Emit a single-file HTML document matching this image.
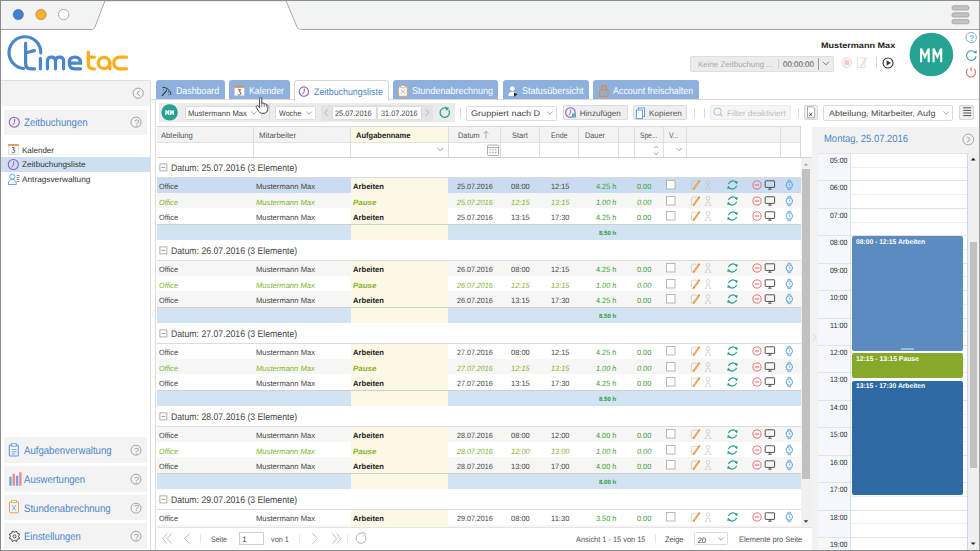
<!DOCTYPE html>
<html><head><meta charset="utf-8">
<style>
*{margin:0;padding:0;box-sizing:border-box}
html,body{width:980px;height:551px;overflow:hidden;background:#fff}
body{position:relative;font-family:"Liberation Sans",sans-serif;color:#333;text-rendering:geometricPrecision}
.ab{position:absolute}
.t{position:absolute;white-space:nowrap;line-height:1}
svg{overflow:visible}
</style></head><body>
<div class="ab" style="left:0px;top:0px;width:980px;height:30px;background:#f2f3f3"></div>
<svg class="ab" style="left:0px;top:0px;" width="980" height="32" viewBox="0 0 980 32">
<path d="M0 29.5 L92 29.5 Q94 29.5 95 27.5 L105 1 L286 1 L297 27.5 Q298 29.5 300 29.5 L980 29.5" fill="none" stroke="#a3a3a3" stroke-width="1.2"/>
<path d="M92 30.3 L92 29.6 Q94.5 29.6 95.3 27.5 L105.3 1.3 L285.7 1.3 L296.7 27.5 Q297.5 29.6 301 29.6 L301 30.3 Z" fill="#fff"/>
<circle cx="18.3" cy="14.5" r="5.2" fill="#3f7fcc" stroke="#5a6d80" stroke-width="0.5"/>
<circle cx="41" cy="14.5" r="5.2" fill="#f8b02a" stroke="#8a7550" stroke-width="0.5"/>
<circle cx="63.7" cy="14.5" r="5.2" fill="#fff" stroke="#9a9a9a" stroke-width="0.8"/>
<rect x="952" y="5.8" width="17" height="4.2" rx="1.8" fill="#c3c3c3" stroke="#9d9d9d" stroke-width="0.8"/>
<rect x="952" y="12.8" width="17" height="4.2" rx="1.8" fill="#c3c3c3" stroke="#9d9d9d" stroke-width="0.8"/>
<rect x="952" y="19.6" width="17" height="4.2" rx="1.8" fill="#c3c3c3" stroke="#9d9d9d" stroke-width="0.8"/>
</svg>
<svg class="ab" style="left:0px;top:30px;" width="140" height="50" viewBox="0 0 140 50">
<g transform="translate(0,-30)">
<g fill="none" stroke="#4a86c8" stroke-width="3.2" stroke-linecap="round">
<path d="M40.8 52.9 A15.9 15.9 0 1 0 23.6 68.5"/>
<path d="M25.6 43.2 L25.6 63.5 Q25.6 68.8 31 68.8 L34.6 68.8"/>
<path d="M25.8 52.8 L34.4 50.6"/>
<path d="M40.4 58.4 L40.4 68.8"/>
<path d="M47.4 68.8 L47.4 61.5 Q47.4 57.2 51.5 57.2 Q55.5 57.2 55.5 61.5 L55.5 68.8 M55.5 61.5 Q55.5 57.2 59.6 57.2 Q63.6 57.2 63.6 61.5 L63.6 68.8"/>
<path d="M69.6 63.2 L80.6 63.2 Q80.6 57.2 74.8 57.2 Q69.2 57.2 69.2 63 Q69.2 68.8 75 68.8 L80.6 68.8"/>
</g>
<g fill="none" stroke="#fbae17" stroke-width="3.3" stroke-linecap="round">
<path d="M88.3 52.2 L88.3 63.5 Q88.3 68.9 93.6 68.9 L94.2 68.9"/>
<path d="M88.5 57.2 L94.2 57.2"/>
<circle cx="104" cy="62.9" r="5.6"/>
<path d="M109.8 61.5 L109.8 68.9"/>
<path d="M126.5 57.2 L119.6 57.2 A5.85 5.85 0 0 0 119.6 68.9 L126.5 68.9"/>
</g></g></svg>
<svg class="ab" style="left:840px;top:30px;" width="140" height="50" viewBox="0 0 140 50">
<g transform="translate(-840,-30)">
<circle cx="931.4" cy="54.5" r="21.8" fill="#26a393"/>
<circle cx="971.2" cy="37.5" r="5.2" fill="none" stroke="#7fb1e3" stroke-width="1"/>
<path d="M975 52.4 A4.8 4.8 0 1 0 976.1 56.2" fill="none" stroke="#3fa596" stroke-width="1.1"/>
<path d="M973.4 52.9 L976.6 53.2 L976.6 49.9 Z" fill="#3fa596"/>
<path d="M967.8 68.8 A4.7 4.7 0 1 0 974.2 68.8" fill="none" stroke="#e66a6a" stroke-width="1.1"/>
<path d="M971 67.2 L971 71.2" fill="none" stroke="#e66a6a" stroke-width="1.1"/>
<circle cx="846.8" cy="62.6" r="4.7" fill="none" stroke="#f4c6c6" stroke-width="1"/>
<rect x="844.3" y="60.1" width="5" height="5" rx="0.8" fill="#f4c6c6"/>
<rect x="857.5" y="58" width="7.6" height="9.5" fill="none" stroke="#d3e3f4" stroke-width="0.9"/>
<path d="M861 66.5 L866.3 57.8" stroke="#f5e0bb" stroke-width="1.8" fill="none"/>
<path d="M876.5 57 L876.5 68.5" stroke="#d6d6d6" stroke-width="1" fill="none"/>
<circle cx="888" cy="63" r="5" fill="none" stroke="#333" stroke-width="1.1"/>
<path d="M886.6 60.3 L890.9 63 L886.6 65.7 Z" fill="#333"/>
</g></svg>
<div class="t" style="left:969.2px;top:34.51px;font-size:8.14px;color:#7fb1e3;font-weight:bold;">?</div>
<svg class="ab" style="left:915px;top:44px;" width="32" height="22" viewBox="0 0 32 22"><path d="M6.1 18.3 V4.6 L9.9 12.8 L13.7 4.6 V18.3 M18.6 18.3 V4.6 L22.4 12.8 L26.2 4.6 V18.3" fill="none" stroke="#fff" stroke-width="2.1" stroke-linejoin="miter" stroke-miterlimit="3"/></svg>
<div class="t" style="left:820.9px;top:41.93px;font-size:7.99px;color:#222;font-weight:bold;transform:scaleX(1.138);transform-origin:0 0;">Mustermann Max</div>
<div class="ab" style="left:690px;top:56px;width:144.3px;height:15.6px;background:#ececec;border:1px solid #dedede;border-radius:2px"></div>
<div class="t" style="left:698px;top:60.91px;font-size:8.14px;color:#a9a9a9;transform:scaleX(0.975);transform-origin:0 0;">Keine Zeitbuchung ...</div>
<div class="ab" style="left:777.8px;top:58.5px;width:0.8px;height:10.5px;background:#d0d0d0"></div>
<div class="t" style="left:783px;top:60.91px;font-size:8.14px;color:#555;transform:scaleX(0.978);transform-origin:0 0;">00:00:00</div>
<div class="ab" style="left:818px;top:58px;width:1px;height:11.5px;background:#9a9a9a"></div>
<svg class="ab" style="left:822px;top:61px;" width="8" height="5" viewBox="0 0 8 5"><path d="M0.8 0.8 L4 3.8 L7.2 0.8" fill="none" stroke="#777" stroke-width="0.9"/></svg>
<div class="ab" style="left:1px;top:80px;width:150px;height:471px;border:1px solid #dedede;border-left:none;border-top-right-radius:3px;background:#fff"></div>
<div class="ab" style="left:155.2px;top:99.5px;width:1px;height:450.1px;background:#dcdcdc"></div>
<svg class="ab" style="left:151px;top:308px;" width="5" height="12" viewBox="0 0 5 12"><path d="M3.6 1 L1.2 5.5 L3.6 10" fill="none" stroke="#dedede" stroke-width="0.8"/></svg>
<div class="ab" style="left:1px;top:81px;width:149px;height:25.3px;background:#f3f3f3"></div>
<div class="ab" style="left:4px;top:109.5px;width:142.6px;height:25.4px;background:#f3f3f3"></div>
<div class="ab" style="left:1px;top:157px;width:148.6px;height:14.8px;background:#cddff1"></div>
<svg class="ab" style="left:0px;top:80px;" width="152" height="110" viewBox="0 0 152 110"><g transform="translate(0,-80)">
<circle cx="138.2" cy="93.2" r="5.1" fill="none" stroke="#9a9a9a" stroke-width="0.9"/>
<path d="M139.6 90.6 L137 93.2 L139.6 95.8" fill="none" stroke="#8a8a8a" stroke-width="0.9"/>
<circle cx="14.3" cy="122.2" r="5" fill="none" stroke="#8e63b8" stroke-width="1.1"/>
<path d="M14.8 118.8 L14.5 122.5 L12.8 125" fill="none" stroke="#8e63b8" stroke-width="1"/>
<circle cx="136" cy="122.2" r="5.1" fill="none" stroke="#9a9a9a" stroke-width="0.9"/>
<rect x="8.5" y="144.5" width="9.8" height="9.8" fill="#fff" stroke="#c9c9c9" stroke-width="0.6"/>
<rect x="8.3" y="144.2" width="10.2" height="1.6" fill="#e8883a"/>
<circle cx="13.3" cy="164.5" r="5" fill="none" stroke="#8e63b8" stroke-width="1.1"/>
<path d="M13.8 161.2 L13.5 164.8 L11.8 167.3" fill="none" stroke="#8e63b8" stroke-width="1"/>
<circle cx="12.3" cy="176.5" r="2.6" fill="none" stroke="#6aa7e0" stroke-width="1"/>
<path d="M8.3 184.5 Q8.3 179.3 12.3 179.3 Q16.3 179.3 16.3 184.5 Z" fill="none" stroke="#6aa7e0" stroke-width="1"/>
<path d="M16.8 175.5 h2.6 M16.8 177.5 h2.6 M16.8 179.5 h2.6 M16.8 181.5 h2.6" stroke="#555" stroke-width="0.7"/>
</g></svg>
<svg class="ab" style="left:11px;top:147px;" width="5" height="7" viewBox="0 0 5 7"><path d="M0.9 0.7 L3.6 0.7 L2 2.6 Q3.8 2.6 3.8 4.3 Q3.8 6 2.2 6 Q1.1 6 0.7 5.3" fill="none" stroke="#333" stroke-width="0.75"/></svg>
<div class="t" style="left:134.2px;top:118.52px;font-size:9.3px;color:#9a9a9a;">?</div>
<div class="t" style="left:24.3px;top:118.19px;font-size:10.76px;color:#4a86c8;transform:scaleX(0.895);transform-origin:0 0;">Zeitbuchungen</div>
<div class="t" style="left:21.5px;top:146.51px;font-size:8.14px;color:#333;transform:scaleX(0.982);transform-origin:0 0;">Kalender</div>
<div class="t" style="left:21.5px;top:161.41px;font-size:8.14px;color:#333;transform:scaleX(1.007);transform-origin:0 0;">Zeitbuchungsliste</div>
<div class="t" style="left:21.5px;top:176.41px;font-size:8.14px;color:#333;transform:scaleX(1.016);transform-origin:0 0;">Antragsverwaltung</div>
<div class="ab" style="left:4px;top:437px;width:142.6px;height:25.6px;background:#f3f3f3"></div>
<div class="t" style="left:24.3px;top:445.89px;font-size:10.76px;color:#4a86c8;transform:scaleX(0.894);transform-origin:0 0;">Aufgabenverwaltung</div>
<svg class="ab" style="left:130px;top:444.8px;" width="12" height="12" viewBox="0 0 12 12"><circle cx="6" cy="5.2" r="5" fill="none" stroke="#9a9a9a" stroke-width="0.9"/></svg>
<div class="t" style="left:133.9px;top:446.57px;font-size:9.01px;color:#9a9a9a;">?</div>
<div class="ab" style="left:4px;top:466.2px;width:142.6px;height:25.6px;background:#f3f3f3"></div>
<div class="t" style="left:24.3px;top:475.09px;font-size:10.76px;color:#4a86c8;transform:scaleX(0.890);transform-origin:0 0;">Auswertungen</div>
<svg class="ab" style="left:130px;top:474px;" width="12" height="12" viewBox="0 0 12 12"><circle cx="6" cy="5.2" r="5" fill="none" stroke="#9a9a9a" stroke-width="0.9"/></svg>
<div class="t" style="left:133.9px;top:475.77px;font-size:9.01px;color:#9a9a9a;">?</div>
<div class="ab" style="left:4px;top:494.7px;width:142.6px;height:25.6px;background:#f3f3f3"></div>
<div class="t" style="left:24.3px;top:503.59px;font-size:10.76px;color:#4a86c8;transform:scaleX(0.895);transform-origin:0 0;">Stundenabrechnung</div>
<svg class="ab" style="left:130px;top:502.5px;" width="12" height="12" viewBox="0 0 12 12"><circle cx="6" cy="5.2" r="5" fill="none" stroke="#9a9a9a" stroke-width="0.9"/></svg>
<div class="t" style="left:133.9px;top:504.27px;font-size:9.01px;color:#9a9a9a;">?</div>
<div class="ab" style="left:4px;top:523.3px;width:142.6px;height:25.6px;background:#f3f3f3"></div>
<div class="t" style="left:24.3px;top:532.19px;font-size:10.76px;color:#4a86c8;transform:scaleX(0.878);transform-origin:0 0;">Einstellungen</div>
<svg class="ab" style="left:130px;top:531.1px;" width="12" height="12" viewBox="0 0 12 12"><circle cx="6" cy="5.2" r="5" fill="none" stroke="#9a9a9a" stroke-width="0.9"/></svg>
<div class="t" style="left:133.9px;top:532.87px;font-size:9.01px;color:#9a9a9a;">?</div>
<svg class="ab" style="left:0px;top:430px;" width="30" height="121" viewBox="0 0 30 121">
<rect x="9.3" y="15" width="9" height="11" rx="1" fill="none" stroke="#5c9ddb" stroke-width="1.1"/>
<rect x="11.3" y="13.7" width="5" height="2.4" fill="#fff" stroke="#5c9ddb" stroke-width="0.9"/>
<path d="M11.5 19.5 h5 M11.5 21.8 h5 M11.5 24 h3.5" stroke="#5c9ddb" stroke-width="0.8"/>
<rect x="9.3" y="46.7" width="2.4" height="9" fill="#6ea9e3"/>
<rect x="12.6" y="43.7" width="2.4" height="12" fill="#f08c8c"/>
<rect x="15.9" y="45.7" width="2.4" height="10" fill="#6ea9e3"/>
<rect x="19.2" y="42.2" width="2.4" height="13.5" fill="#f08c8c"/>
<rect x="9.5" y="71.6" width="9" height="11.2" rx="1" fill="none" stroke="#e0a35c" stroke-width="1"/>
<rect x="11.6" y="70.6" width="4.8" height="2" fill="#fff" stroke="#e0a35c" stroke-width="0.8"/>
<path d="M12 75 L16 80.5 M16 75 L12 80.5" stroke="#6aa7e0" stroke-width="0.8"/>
<path d="M18.60 106.31 L18.64 107.02 L19.63 107.63 L19.07 108.99 L17.94 108.72 L17.41 109.19 L17.39 109.21 L16.92 109.74 L17.19 110.87 L15.83 111.43 L15.22 110.44 L14.51 110.40 L14.49 110.40 L13.78 110.44 L13.17 111.43 L11.81 110.87 L12.08 109.74 L11.61 109.21 L11.59 109.19 L11.06 108.72 L9.93 108.99 L9.37 107.63 L10.36 107.02 L10.40 106.31 L10.40 106.29 L10.36 105.58 L9.37 104.97 L9.93 103.61 L11.06 103.88 L11.59 103.41 L11.61 103.39 L12.08 102.86 L11.81 101.73 L13.17 101.17 L13.78 102.16 L14.49 102.20 L14.51 102.20 L15.22 102.16 L15.83 101.17 L17.19 101.73 L16.92 102.86 L17.39 103.39 L17.41 103.41 L17.94 103.88 L19.07 103.61 L19.63 104.97 L18.64 105.58 L18.60 106.29 Z" fill="none" stroke="#444" stroke-width="0.95"/>
<circle cx="14.5" cy="106.3" r="1.5" fill="none" stroke="#444" stroke-width="0.9"/>
</svg>
<div class="ab" style="left:156.3px;top:80.2px;width:68.4px;height:19.8px;background:#8db0dc;border-radius:3px 3px 0 0"></div>
<div class="ab" style="left:229px;top:80.2px;width:60.6px;height:19.8px;background:#8db0dc;border-radius:3px 3px 0 0"></div>
<div class="ab" style="left:392.6px;top:80.2px;width:105.3px;height:19.8px;background:#8db0dc;border-radius:3px 3px 0 0"></div>
<div class="ab" style="left:502.6px;top:80.2px;width:86.3px;height:19.8px;background:#8db0dc;border-radius:3px 3px 0 0"></div>
<div class="ab" style="left:593.1px;top:80.2px;width:105.5px;height:19.8px;background:#8db0dc;border-radius:3px 3px 0 0"></div>
<div class="ab" style="left:151px;top:99.4px;width:828px;height:1px;background:#d9d9d9"></div>
<div class="ab" style="left:293.6px;top:80.3px;width:95.2px;height:20.3px;background:#fff;border:1px solid #d6d6d6;border-bottom:none;border-radius:3px 3px 0 0"></div>
<div class="t" style="left:176.1px;top:87.43px;font-size:9.88px;color:#fff;transform:scaleX(0.893);transform-origin:0 0;">Dashboard</div>
<div class="t" style="left:249.3px;top:87.43px;font-size:9.88px;color:#fff;transform:scaleX(0.885);transform-origin:0 0;">Kalender</div>
<div class="t" style="left:314px;top:87.78px;font-size:9.59px;color:#4a86c8;transform:scaleX(0.923);transform-origin:0 0;">Zeitbuchungsliste</div>
<div class="t" style="left:412.1px;top:87.43px;font-size:9.88px;color:#fff;transform:scaleX(0.910);transform-origin:0 0;">Stundenabrechnung</div>
<div class="t" style="left:522.1px;top:87.43px;font-size:9.88px;color:#fff;transform:scaleX(0.903);transform-origin:0 0;">Statusübersicht</div>
<div class="t" style="left:612.9px;top:87.43px;font-size:9.88px;color:#fff;transform:scaleX(0.901);transform-origin:0 0;">Account freischalten</div>
<svg class="ab" style="left:150px;top:80px;" width="470" height="20" viewBox="0 0 470 20"><g transform="translate(-150,-80)">
<path d="M162 95.8 L166.6 90.6" stroke="#333" stroke-width="1.1"/>
<path d="M162.4 87.2 A8.6 8.6 0 0 1 171 94.6" fill="none" stroke="#333" stroke-width="1"/>
<path d="M163.6 89.6 h0.01 M166.4 90 h0.01 M168.4 92 h0.01 M168.8 94.6 h0.01" stroke="#333" stroke-width="0.9" stroke-linecap="round"/>
<rect x="234.6" y="86.3" width="9.6" height="9.4" fill="#fff" stroke="#ccc" stroke-width="0.5"/>
<rect x="234.4" y="86" width="10" height="1.8" fill="#e8883a"/>
<circle cx="303.9" cy="91.6" r="4.7" fill="none" stroke="#8e63b8" stroke-width="1.1"/>
<path d="M304.4 88.5 L304.1 91.9 L302.5 94.3" fill="none" stroke="#8e63b8" stroke-width="1"/>
<rect x="398.6" y="86.8" width="8.6" height="9.4" rx="1" fill="#fff" stroke="#e0a35c" stroke-width="1"/>
<rect x="400.6" y="85.6" width="4.6" height="2.2" rx="0.5" fill="#fff" stroke="#e0a35c" stroke-width="0.8"/>
<path d="M400.8 89.2 L405 94 M405 89.2 L400.8 94" stroke="#6aa7e0" stroke-width="0.7"/>
<circle cx="512.3" cy="88.6" r="2.4" fill="#fff"/>
<path d="M508.3 96 Q508.3 91.8 512.3 91.8 Q516.3 91.8 516.3 96 Z" fill="#fff"/>
<path d="M514 92.5 L517.5 94.6 L514 96.7 Z" fill="#222"/>
<rect x="599.5" y="89.8" width="8.6" height="6.6" rx="1.2" fill="none" stroke="#e0883a" stroke-width="1.1"/>
<path d="M601.3 89.8 L601.3 88 Q601.3 85.6 603.8 85.6 Q606.3 85.6 606.3 88 L606.3 89.8" fill="none" stroke="#e0883a" stroke-width="1.1"/>
<path d="M602.5 93 h2.6" stroke="#e0883a" stroke-width="0.8"/>
</g></svg>
<svg class="ab" style="left:237.4px;top:88.6px;" width="5" height="7" viewBox="0 0 5 7"><path d="M0.9 0.7 L3.6 0.7 L2 2.6 Q3.8 2.6 3.8 4.3 Q3.8 6 2.2 6 Q1.1 6 0.7 5.3" fill="none" stroke="#333" stroke-width="0.75"/></svg>
<div class="ab" style="left:159.2px;top:103.3px;width:295.5px;height:18.6px;background:#ececec"></div>
<svg class="ab" style="left:150px;top:100px;" width="320" height="25" viewBox="0 0 320 25"><g transform="translate(-150,-100)">
<circle cx="169.6" cy="112.4" r="8.2" fill="#26a393"/>
</g></svg>
<svg class="ab" style="left:164px;top:109px;" width="12" height="7" viewBox="0 0 12 7"><path d="M1.9 6 V1.3 L3.3 4 L4.7 1.3 V6 M6.6 6 V1.3 L8 4 L9.4 1.3 V6" fill="none" stroke="#e4f4f1" stroke-width="1.3"/></svg>
<div class="ab" style="left:184.6px;top:105.6px;width:77.5px;height:14.7px;background:#fff;border:1px solid #dcdcdc;border-radius:1.5px"></div>
<svg class="ab" style="left:251.3px;top:110.9px;" width="6" height="4" viewBox="0 0 6 4"><path d="M0.4 0.6 L3 3.2 L5.6 0.6" fill="none" stroke="#8a8a8a" stroke-width="0.8"/></svg>
<div class="t" style="left:188.3px;top:110.35px;font-size:7.85px;color:#444;transform:scaleX(0.970);transform-origin:0 0;">Mustermann Max</div>
<div class="ab" style="left:268.6px;top:103.1px;width:1px;height:18.9px;background:#dedede"></div>
<div class="ab" style="left:275.4px;top:105.6px;width:41px;height:14.7px;background:#fff;border:1px solid #dcdcdc;border-radius:1.5px"></div>
<svg class="ab" style="left:306.3px;top:110.9px;" width="6" height="4" viewBox="0 0 6 4"><path d="M0.4 0.6 L3 3.2 L5.6 0.6" fill="none" stroke="#8a8a8a" stroke-width="0.8"/></svg>
<div class="t" style="left:278.9px;top:110.35px;font-size:7.85px;color:#444;transform:scaleX(0.914);transform-origin:0 0;">Woche</div>
<div class="ab" style="left:321.1px;top:105.3px;width:112.1px;height:15.3px;background:#e3e3e3;border-radius:1.5px"></div>
<div class="ab" style="left:331.7px;top:105.6px;width:45.2px;height:14.7px;background:#fff;border:1px solid #dcdcdc;border-radius:1.5px"></div>
<div class="ab" style="left:377.4px;top:105.6px;width:44.7px;height:14.7px;background:#fff;border:1px solid #dcdcdc;border-radius:1.5px"></div>
<div class="t" style="left:335.4px;top:110.35px;font-size:7.85px;color:#444;transform:scaleX(0.934);transform-origin:0 0;">25.07.2016</div>
<div class="t" style="left:381.4px;top:110.35px;font-size:7.85px;color:#444;transform:scaleX(0.934);transform-origin:0 0;">31.07.2016</div>
<svg class="ab" style="left:320px;top:104px;" width="140" height="18" viewBox="0 0 140 18"><g transform="translate(-320,-104)">
<path d="M327.6 109.5 L325 112.8 L327.6 116.1" fill="none" stroke="#aaa" stroke-width="0.8"/>
<path d="M426 109.5 L428.6 112.8 L426 116.1" fill="none" stroke="#aaa" stroke-width="0.8"/>
<path d="M448.8 110.2 A4.7 4.7 0 1 1 446.4 108.2" fill="none" stroke="#2aa593" stroke-width="1.3"/>
<path d="M445.2 106.6 L449.3 108.1 L446.6 111" fill="#2aa593"/>
</g></svg>
<div class="ab" style="left:460.3px;top:108px;width:0.8px;height:10px;background:#dadada"></div>
<div class="ab" style="left:466.1px;top:105.5px;width:91.3px;height:15px;background:#fff;border:1px solid #dcdcdc;border-radius:1.5px"></div>
<svg class="ab" style="left:547px;top:110.9px;" width="6" height="4" viewBox="0 0 6 4"><path d="M0.4 0.6 L3 3.2 L5.6 0.6" fill="none" stroke="#8a8a8a" stroke-width="0.8"/></svg>
<div class="t" style="left:470.7px;top:110.31px;font-size:8.14px;color:#444;transform:scaleX(1.118);transform-origin:0 0;">Gruppiert nach D</div>
<div class="ab" style="left:563.3px;top:105.1px;width:64.3px;height:15.2px;background:#efefef;border:1px solid #dcdcdc;border-radius:2px"></div>
<div class="ab" style="left:633.3px;top:105.1px;width:53.8px;height:15.2px;background:#efefef;border:1px solid #dcdcdc;border-radius:2px"></div>
<div class="t" style="left:579.7px;top:109.51px;font-size:8.14px;color:#555;">Hinzufügen</div>
<div class="t" style="left:649.3px;top:109.51px;font-size:8.14px;color:#555;transform:scaleX(1.007);transform-origin:0 0;">Kopieren</div>
<svg class="ab" style="left:560px;top:103px;" width="250" height="20" viewBox="0 0 250 20"><g transform="translate(-560,-103)">
<circle cx="570.4" cy="112.5" r="4.8" fill="none" stroke="#8e63b8" stroke-width="1.1"/>
<path d="M570.8 109.4 L570.5 112.8 L569 115" fill="none" stroke="#8e63b8" stroke-width="0.9"/>
<rect x="572" y="113.5" width="4" height="4" fill="#4fb9a5"/>
<rect x="638.5" y="108" width="6" height="8.6" fill="#fff" stroke="#5c9ddb" stroke-width="1"/>
<rect x="636.4" y="110" width="6" height="8.6" fill="#fff" stroke="#5c9ddb" stroke-width="1"/>
</g></svg>
<div class="ab" style="left:693.6px;top:108px;width:0.8px;height:10px;background:#dadada"></div>
<div class="ab" style="left:704.3px;top:108px;width:0.8px;height:10px;background:#dadada"></div>
<div class="ab" style="left:710.3px;top:105.1px;width:81.1px;height:15.2px;background:#f6f6f6;border:1px solid #ececec;border-radius:2px"></div>
<svg class="ab" style="left:710px;top:104px;" width="20" height="16" viewBox="0 0 20 16"><circle cx="7.6" cy="7.6" r="3.7" fill="none" stroke="#9cc4ea" stroke-width="1"/><path d="M10.2 10.2 L12.3 12.3" stroke="#9cc4ea" stroke-width="1.1"/></svg>
<div class="t" style="left:727.1px;top:109.51px;font-size:8.14px;color:#bdbdbd;transform:scaleX(1.025);transform-origin:0 0;">Filter deaktiviert</div>
<div class="ab" style="left:797.6px;top:108px;width:0.8px;height:10px;background:#dadada"></div>
<div class="ab" style="left:803.7px;top:104.8px;width:14.7px;height:15.6px;background:#f0f0f0;border:1px solid #d6d6d6;border-radius:2px"></div>
<svg class="ab" style="left:800px;top:100px;" width="180" height="25" viewBox="0 0 180 25"><g transform="translate(-800,-100)">
<path d="M807.5 106.8 L812.6 106.8 L814.6 108.8 L814.6 117.8 L807.5 117.8 Z" fill="#fff" stroke="#888" stroke-width="0.7"/>
<path d="M809.3 112.6 L812.2 116.2 M812.2 112.6 L809.3 116.2" stroke="#444" stroke-width="0.8"/>
<path d="M963.2 107.8 h8 M963.2 110.4 h8 M963.2 113 h8 M963.2 115.6 h8" stroke="#555" stroke-width="1"/>
</g></svg>
<div class="ab" style="left:823.3px;top:104.8px;width:130.1px;height:15.8px;background:#fff;border:1px solid #dcdcdc;border-radius:1.5px"></div>
<svg class="ab" style="left:943.4px;top:111.2px;" width="6" height="4" viewBox="0 0 6 4"><path d="M0.4 0.6 L3 3.2 L5.6 0.6" fill="none" stroke="#8a8a8a" stroke-width="0.8"/></svg>
<div class="t" style="left:828.5px;top:110.41px;font-size:8.14px;color:#444;transform:scaleX(1.095);transform-origin:0 0;">Abteilung, Mitarbeiter, Aufg</div>
<div class="ab" style="left:959.4px;top:104.8px;width:15.1px;height:15.6px;background:#f0f0f0;border:1px solid #d6d6d6;border-radius:2px"></div>
<svg class="ab" style="left:959px;top:104px;" width="16" height="17" viewBox="0 0 16 17"><path d="M4.2 3.8 h8 M4.2 6.4 h8 M4.2 9 h8 M4.2 11.6 h8" stroke="#555" stroke-width="1"/></svg>
<svg class="ab" style="left:254px;top:95px;" width="16" height="20" viewBox="0 0 16 20"><g transform="translate(-254,-95)">
<path d="M259.6 98.8 Q259.6 97.6 260.7 97.6 Q261.8 97.6 261.8 98.8 L261.8 103.6 Q262.2 102.8 263.1 102.9 Q264.1 103 264.2 104.2 Q264.6 103.6 265.4 103.7 Q266.3 103.9 266.4 105 Q266.9 104.6 267.5 104.9 Q268.1 105.3 268 106.5 L267.7 109.6 Q267.3 112.6 265 113.2 L261.5 113.3 Q259.9 113.2 258.9 111.6 L256.3 107.4 Q255.8 106.4 256.6 105.8 Q257.4 105.3 258.2 106.1 L259.6 107.6 Z" fill="#fff" stroke="#333" stroke-width="0.9"/>
<path d="M261.8 103.6 L261.8 107 M264.2 104.2 L264.2 107 M266.4 105 L266.4 107.4" stroke="#333" stroke-width="0.6"/>
</g></svg>
<div class="ab" style="left:156.5px;top:126.4px;width:644px;height:16px;background:#f3f3f3"></div>
<div class="ab" style="left:350.6px;top:126.4px;width:97.8px;height:16px;background:#fdf8e4"></div>
<div class="ab" style="left:156.5px;top:126px;width:644px;height:1px;background:#dcdcdc"></div>
<div class="ab" style="left:156.5px;top:142px;width:644px;height:1px;background:#e2e2e2"></div>
<div class="ab" style="left:253.1px;top:126.5px;width:1px;height:30.5px;background:#dedede"></div>
<div class="ab" style="left:350.1px;top:126.5px;width:1px;height:30.5px;background:#dedede"></div>
<div class="ab" style="left:447.9px;top:126.5px;width:1px;height:30.5px;background:#dedede"></div>
<div class="ab" style="left:500.2px;top:126.5px;width:1px;height:30.5px;background:#dedede"></div>
<div class="ab" style="left:539px;top:126.5px;width:1px;height:30.5px;background:#dedede"></div>
<div class="ab" style="left:578.3px;top:126.5px;width:1px;height:30.5px;background:#dedede"></div>
<div class="ab" style="left:617.7px;top:126.5px;width:1px;height:30.5px;background:#dedede"></div>
<div class="ab" style="left:634px;top:126.5px;width:1px;height:30.5px;background:#dedede"></div>
<div class="ab" style="left:663.1px;top:126.5px;width:1px;height:30.5px;background:#dedede"></div>
<div class="ab" style="left:685.9px;top:126.5px;width:1px;height:30.5px;background:#dedede"></div>
<div class="ab" style="left:780px;top:126.5px;width:1px;height:30.5px;background:#dedede"></div>
<div class="ab" style="left:800px;top:126.5px;width:1px;height:30.5px;background:#d6d6d6"></div>
<div class="ab" style="left:156.5px;top:156.8px;width:655.1px;height:1px;background:#c9d4e0"></div>
<div class="t" style="left:161px;top:131.83px;font-size:7.99px;color:#555;transform:scaleX(0.957);transform-origin:0 0;">Abteilung</div>
<div class="t" style="left:258.6px;top:131.83px;font-size:7.99px;color:#555;transform:scaleX(0.982);transform-origin:0 0;">Mitarbeiter</div>
<div class="t" style="left:355.9px;top:131.83px;font-size:7.99px;color:#222;font-weight:bold;transform:scaleX(0.944);transform-origin:0 0;">Aufgabenname</div>
<div class="t" style="left:457.9px;top:131.83px;font-size:7.99px;color:#555;transform:scaleX(0.926);transform-origin:0 0;">Datum</div>
<div class="t" style="left:512.1px;top:131.83px;font-size:7.99px;color:#555;transform:scaleX(0.936);transform-origin:0 0;">Start</div>
<div class="t" style="left:551.1px;top:131.83px;font-size:7.99px;color:#555;transform:scaleX(0.884);transform-origin:0 0;">Ende</div>
<div class="t" style="left:585px;top:131.83px;font-size:7.99px;color:#555;transform:scaleX(0.918);transform-origin:0 0;">Dauer</div>
<div class="t" style="left:639.6px;top:131.83px;font-size:7.99px;color:#555;transform:scaleX(0.828);transform-origin:0 0;">Spe...</div>
<div class="t" style="left:668.6px;top:131.83px;font-size:7.99px;color:#555;transform:scaleX(0.843);transform-origin:0 0;">V...</div>
<svg class="ab" style="left:430px;top:128px;" width="260" height="30" viewBox="0 0 260 30"><g transform="translate(-430,-128)">
<path d="M486 131.2 L486 138.6 M483.6 133.6 L486 131.2 L488.4 133.6" fill="none" stroke="#999" stroke-width="0.8"/>
<path d="M437.6 148 L440.4 150.8 L443.2 148" fill="none" stroke="#888" stroke-width="0.8"/>
<path d="M676.5 148 L679.3 150.8 L682.1 148" fill="none" stroke="#888" stroke-width="0.8"/>
<path d="M654 148.3 L656.1 146.2 L658.2 148.3 M654 152.6 L656.1 154.7 L658.2 152.6" fill="none" stroke="#888" stroke-width="0.8"/>
<rect x="487.5" y="145" width="11" height="10.5" rx="1" fill="none" stroke="#999" stroke-width="0.8"/>
<path d="M487.5 147.6 h11" stroke="#999" stroke-width="0.8"/>
<path d="M489.5 149.8 h1.6 M492.2 149.8 h1.6 M494.9 149.8 h1.6 M489.5 152.4 h1.6 M492.2 152.4 h1.6 M494.9 152.4 h1.6" stroke="#aaa" stroke-width="1"/>
</g></svg>
<div class="ab" style="left:156.5px;top:157.8px;width:644.5px;height:370px;overflow:hidden">
<div class="ab" style="left:0px;top:-0.3px;width:644px;height:19.9px;background:#fff"></div>
<svg class="ab" style="left:2px;top:5.7px;" width="10" height="9" viewBox="0 0 10 9"><rect x="0.9" y="0.9" width="7" height="7" fill="#fff" stroke="#9a9a9a" stroke-width="0.8"/><path d="M2.4 4.4 h4" stroke="#888" stroke-width="0.8"/></svg>
<div class="t" style="left:14.3px;top:5.98px;font-size:9.59px;color:#444;transform:scaleX(0.908);transform-origin:0 0;">Datum: 25.07.2016 (3 Elemente)</div>
<div class="ab" style="left:0px;top:19.6px;width:644px;height:15.9px;background:#cadcf0"></div>
<div class="ab" style="left:194.1px;top:19.6px;width:97.8px;height:15.9px;background:#fbf7e6"></div>
<div class="ab" style="left:0px;top:35.1px;width:644px;height:0.8px;background:#ebebeb"></div>
<div class="t" style="left:2.4px;top:25.08px;font-size:7.7px;color:#444;transform:scaleX(0.956);transform-origin:0 0;">Office</div>
<div class="t" style="left:99.3px;top:25.08px;font-size:7.7px;color:#444;transform:scaleX(0.995);transform-origin:0 0;">Mustermann Max</div>
<div class="t" style="left:196.8px;top:25.08px;font-size:7.7px;color:#222;font-weight:bold;transform:scaleX(0.992);transform-origin:0 0;">Arbeiten</div>
<div class="t" style="left:300.5px;top:25.08px;font-size:7.7px;color:#444;transform:scaleX(0.929);transform-origin:0 0;">25.07.2016</div>
<div class="t" style="left:354.5px;top:25.08px;font-size:7.7px;color:#444;transform:scaleX(0.975);transform-origin:0 0;">08:00</div>
<div class="t" style="left:394.1px;top:25.08px;font-size:7.7px;color:#444;transform:scaleX(0.955);transform-origin:0 0;">12:15</div>
<div class="t" style="left:439.3px;top:25.08px;font-size:7.7px;color:#3a9c3a;transform:scaleX(0.953);transform-origin:0 0;">4.25 h</div>
<div class="t" style="left:480.2px;top:25.08px;font-size:7.7px;color:#3a9c3a;transform:scaleX(0.954);transform-origin:0 0;">0.00</div>
<svg class="ab" style="left:507.5px;top:21.55px;" width="140" height="12" viewBox="0 0 140 12"><g transform="translate(-664,0)">
<rect x="666.6" y="1.6" width="8.4" height="8.4" fill="#fff" stroke="#a8a8a8" stroke-width="0.8"/>
<path d="M697.6 2.2 L692.2 2.2 L691.4 3 L691.4 10.2 L695 10.2" fill="none" stroke="#c6c6c6" stroke-width="0.7"/>
<path d="M693.8 9.8 L699.2 2.2" stroke="#f0882a" stroke-width="1.9" fill="none" stroke-linecap="round"/>
<path d="M694.2 9.2 L698.6 2.9" stroke="#fde3c8" stroke-width="0.5" fill="none"/>
<circle cx="708" cy="3.4" r="1.9" fill="none" stroke="#c4c4c4" stroke-width="0.7"/>
<path d="M708 5.4 L708 7.2 M705.6 10.4 L706.6 7.6 L709.4 7.6 L710.4 10.4 M704.6 10.4 h2.4 M709 10.4 h2.4" fill="none" stroke="#c4c4c4" stroke-width="0.6"/>
<path d="M728.4 5.2 A4.5 4.5 0 0 1 736.2 3.6" fill="none" stroke="#28a08e" stroke-width="1.2"/>
<path d="M736.6 6.8 A4.5 4.5 0 0 1 728.8 8.4" fill="none" stroke="#28a08e" stroke-width="1.2"/>
<path d="M734.4 2.6 L737.8 2.2 L737 5.6 Z M730.6 9.4 L727.2 9.8 L728 6.4 Z" fill="#28a08e"/>
<circle cx="757" cy="6" r="4.1" fill="none" stroke="#e8636b" stroke-width="0.9"/>
<path d="M754.8 6 h4.4" stroke="#e8636b" stroke-width="1"/>
<rect x="765.2" y="1.8" width="9.4" height="6.6" rx="0.5" fill="none" stroke="#4a4a4a" stroke-width="0.95"/>
<path d="M768.2 10.2 h3.4 M769.9 8.4 v1.8" stroke="#4a4a4a" stroke-width="0.95"/>
<circle cx="789.3" cy="6" r="3.2" fill="none" stroke="#5a9ee0" stroke-width="0.95"/>
<path d="M787.6 2.9 L788 1.3 h2.6 L791 2.9 M787.6 9.1 L788 10.7 h2.6 L791 9.1" fill="none" stroke="#5a9ee0" stroke-width="0.8"/>
<path d="M789.3 4.4 V6.2 H790.6" fill="none" stroke="#5a9ee0" stroke-width="0.7"/>
</g></svg>
<div class="ab" style="left:0px;top:35.5px;width:644px;height:15.2px;background:#f6f6f4"></div>
<div class="ab" style="left:194.1px;top:35.5px;width:97.8px;height:15.2px;background:#fdf8e5"></div>
<div class="ab" style="left:0px;top:50.3px;width:644px;height:0.8px;background:#ebebeb"></div>
<div class="t" style="left:2.4px;top:40.98px;font-size:7.7px;color:#86b22c;font-style:italic;transform:scaleX(0.949);transform-origin:0 0;">Office</div>
<div class="t" style="left:99.3px;top:40.98px;font-size:7.7px;color:#86b22c;font-style:italic;transform:scaleX(0.991);transform-origin:0 0;">Mustermann Max</div>
<div class="t" style="left:196.8px;top:40.98px;font-size:7.7px;color:#86b22c;font-weight:bold;font-style:italic;transform:scaleX(1.035);transform-origin:0 0;">Pause</div>
<div class="t" style="left:300.54px;top:40.98px;font-size:7.7px;color:#86b22c;font-style:italic;transform:scaleX(0.927);transform-origin:0 0;">25.07.2016</div>
<div class="t" style="left:354.5px;top:40.98px;font-size:7.7px;color:#86b22c;font-style:italic;transform:scaleX(0.974);transform-origin:0 0;">12:15</div>
<div class="t" style="left:394.1px;top:40.98px;font-size:7.7px;color:#86b22c;font-style:italic;transform:scaleX(0.954);transform-origin:0 0;">13:15</div>
<div class="t" style="left:439.3px;top:40.98px;font-size:7.7px;color:#3a9c3a;font-style:italic;transform:scaleX(0.953);transform-origin:0 0;">1.00 h</div>
<div class="t" style="left:480.2px;top:40.98px;font-size:7.7px;color:#3a9c3a;font-style:italic;transform:scaleX(0.954);transform-origin:0 0;">0.00</div>
<svg class="ab" style="left:507.5px;top:37.1px;" width="140" height="12" viewBox="0 0 140 12"><g transform="translate(-664,0)">
<rect x="666.6" y="1.6" width="8.4" height="8.4" fill="#fff" stroke="#a8a8a8" stroke-width="0.8"/>
<path d="M697.6 2.2 L692.2 2.2 L691.4 3 L691.4 10.2 L695 10.2" fill="none" stroke="#c6c6c6" stroke-width="0.7"/>
<path d="M693.8 9.8 L699.2 2.2" stroke="#f0882a" stroke-width="1.9" fill="none" stroke-linecap="round"/>
<path d="M694.2 9.2 L698.6 2.9" stroke="#fde3c8" stroke-width="0.5" fill="none"/>
<circle cx="708" cy="3.4" r="1.9" fill="none" stroke="#c4c4c4" stroke-width="0.7"/>
<path d="M708 5.4 L708 7.2 M705.6 10.4 L706.6 7.6 L709.4 7.6 L710.4 10.4 M704.6 10.4 h2.4 M709 10.4 h2.4" fill="none" stroke="#c4c4c4" stroke-width="0.6"/>
<path d="M728.4 5.2 A4.5 4.5 0 0 1 736.2 3.6" fill="none" stroke="#28a08e" stroke-width="1.2"/>
<path d="M736.6 6.8 A4.5 4.5 0 0 1 728.8 8.4" fill="none" stroke="#28a08e" stroke-width="1.2"/>
<path d="M734.4 2.6 L737.8 2.2 L737 5.6 Z M730.6 9.4 L727.2 9.8 L728 6.4 Z" fill="#28a08e"/>
<circle cx="757" cy="6" r="4.1" fill="none" stroke="#e8636b" stroke-width="0.9"/>
<path d="M754.8 6 h4.4" stroke="#e8636b" stroke-width="1"/>
<rect x="765.2" y="1.8" width="9.4" height="6.6" rx="0.5" fill="none" stroke="#4a4a4a" stroke-width="0.95"/>
<path d="M768.2 10.2 h3.4 M769.9 8.4 v1.8" stroke="#4a4a4a" stroke-width="0.95"/>
<circle cx="789.3" cy="6" r="3.2" fill="none" stroke="#5a9ee0" stroke-width="0.95"/>
<path d="M787.6 2.9 L788 1.3 h2.6 L791 2.9 M787.6 9.1 L788 10.7 h2.6 L791 9.1" fill="none" stroke="#5a9ee0" stroke-width="0.8"/>
<path d="M789.3 4.4 V6.2 H790.6" fill="none" stroke="#5a9ee0" stroke-width="0.7"/>
</g></svg>
<div class="ab" style="left:0px;top:50.7px;width:644px;height:15.5px;background:#ffffff"></div>
<div class="ab" style="left:194.1px;top:50.7px;width:97.8px;height:15.5px;background:#fdf8e5"></div>
<div class="t" style="left:2.4px;top:56.18px;font-size:7.7px;color:#444;transform:scaleX(0.956);transform-origin:0 0;">Office</div>
<div class="t" style="left:99.3px;top:56.18px;font-size:7.7px;color:#444;transform:scaleX(0.995);transform-origin:0 0;">Mustermann Max</div>
<div class="t" style="left:196.8px;top:56.18px;font-size:7.7px;color:#222;font-weight:bold;transform:scaleX(0.992);transform-origin:0 0;">Arbeiten</div>
<div class="t" style="left:300.5px;top:56.18px;font-size:7.7px;color:#444;transform:scaleX(0.929);transform-origin:0 0;">25.07.2016</div>
<div class="t" style="left:354.5px;top:56.18px;font-size:7.7px;color:#444;transform:scaleX(0.975);transform-origin:0 0;">13:15</div>
<div class="t" style="left:394.1px;top:56.18px;font-size:7.7px;color:#444;transform:scaleX(0.955);transform-origin:0 0;">17:30</div>
<div class="t" style="left:439.3px;top:56.18px;font-size:7.7px;color:#3a9c3a;transform:scaleX(0.953);transform-origin:0 0;">4.25 h</div>
<div class="t" style="left:480.2px;top:56.18px;font-size:7.7px;color:#3a9c3a;transform:scaleX(0.954);transform-origin:0 0;">0.00</div>
<svg class="ab" style="left:507.5px;top:52.45px;" width="140" height="12" viewBox="0 0 140 12"><g transform="translate(-664,0)">
<rect x="666.6" y="1.6" width="8.4" height="8.4" fill="#fff" stroke="#a8a8a8" stroke-width="0.8"/>
<path d="M697.6 2.2 L692.2 2.2 L691.4 3 L691.4 10.2 L695 10.2" fill="none" stroke="#c6c6c6" stroke-width="0.7"/>
<path d="M693.8 9.8 L699.2 2.2" stroke="#f0882a" stroke-width="1.9" fill="none" stroke-linecap="round"/>
<path d="M694.2 9.2 L698.6 2.9" stroke="#fde3c8" stroke-width="0.5" fill="none"/>
<circle cx="708" cy="3.4" r="1.9" fill="none" stroke="#c4c4c4" stroke-width="0.7"/>
<path d="M708 5.4 L708 7.2 M705.6 10.4 L706.6 7.6 L709.4 7.6 L710.4 10.4 M704.6 10.4 h2.4 M709 10.4 h2.4" fill="none" stroke="#c4c4c4" stroke-width="0.6"/>
<path d="M728.4 5.2 A4.5 4.5 0 0 1 736.2 3.6" fill="none" stroke="#28a08e" stroke-width="1.2"/>
<path d="M736.6 6.8 A4.5 4.5 0 0 1 728.8 8.4" fill="none" stroke="#28a08e" stroke-width="1.2"/>
<path d="M734.4 2.6 L737.8 2.2 L737 5.6 Z M730.6 9.4 L727.2 9.8 L728 6.4 Z" fill="#28a08e"/>
<circle cx="757" cy="6" r="4.1" fill="none" stroke="#e8636b" stroke-width="0.9"/>
<path d="M754.8 6 h4.4" stroke="#e8636b" stroke-width="1"/>
<rect x="765.2" y="1.8" width="9.4" height="6.6" rx="0.5" fill="none" stroke="#4a4a4a" stroke-width="0.95"/>
<path d="M768.2 10.2 h3.4 M769.9 8.4 v1.8" stroke="#4a4a4a" stroke-width="0.95"/>
<circle cx="789.3" cy="6" r="3.2" fill="none" stroke="#5a9ee0" stroke-width="0.95"/>
<path d="M787.6 2.9 L788 1.3 h2.6 L791 2.9 M787.6 9.1 L788 10.7 h2.6 L791 9.1" fill="none" stroke="#5a9ee0" stroke-width="0.8"/>
<path d="M789.3 4.4 V6.2 H790.6" fill="none" stroke="#5a9ee0" stroke-width="0.7"/>
</g></svg>
<div class="ab" style="left:0px;top:19.2px;width:644px;height:0.9px;background:#dcdcdc"></div>
<div class="ab" style="left:0px;top:66.2px;width:644px;height:1.5px;background:#cfcfcf"></div>
<div class="ab" style="left:0px;top:67.7px;width:644px;height:15px;background:#d2e3f3"></div>
<div class="ab" style="left:194.1px;top:67.7px;width:97.8px;height:15px;background:#fdf8e5"></div>
<div class="t" style="left:442.5px;top:73.43px;font-size:6.1px;color:#2e9a2e;font-weight:bold;transform:scaleX(0.994);transform-origin:0 0;">8.50 h</div>
<div class="ab" style="left:0px;top:82.7px;width:644px;height:19.9px;background:#fff"></div>
<svg class="ab" style="left:2px;top:88.7px;" width="10" height="9" viewBox="0 0 10 9"><rect x="0.9" y="0.9" width="7" height="7" fill="#fff" stroke="#9a9a9a" stroke-width="0.8"/><path d="M2.4 4.4 h4" stroke="#888" stroke-width="0.8"/></svg>
<div class="t" style="left:14.3px;top:88.98px;font-size:9.59px;color:#444;transform:scaleX(0.908);transform-origin:0 0;">Datum: 26.07.2016 (3 Elemente)</div>
<div class="ab" style="left:0px;top:102.6px;width:644px;height:15.9px;background:#f6f6f4"></div>
<div class="ab" style="left:194.1px;top:102.6px;width:97.8px;height:15.9px;background:#fdf8e5"></div>
<div class="ab" style="left:0px;top:118.1px;width:644px;height:0.8px;background:#ebebeb"></div>
<div class="t" style="left:2.4px;top:108.08px;font-size:7.7px;color:#444;transform:scaleX(0.956);transform-origin:0 0;">Office</div>
<div class="t" style="left:99.3px;top:108.08px;font-size:7.7px;color:#444;transform:scaleX(0.995);transform-origin:0 0;">Mustermann Max</div>
<div class="t" style="left:196.8px;top:108.08px;font-size:7.7px;color:#222;font-weight:bold;transform:scaleX(0.992);transform-origin:0 0;">Arbeiten</div>
<div class="t" style="left:300.5px;top:108.08px;font-size:7.7px;color:#444;transform:scaleX(0.929);transform-origin:0 0;">26.07.2016</div>
<div class="t" style="left:354.5px;top:108.08px;font-size:7.7px;color:#444;transform:scaleX(0.975);transform-origin:0 0;">08:00</div>
<div class="t" style="left:394.1px;top:108.08px;font-size:7.7px;color:#444;transform:scaleX(0.955);transform-origin:0 0;">12:15</div>
<div class="t" style="left:439.3px;top:108.08px;font-size:7.7px;color:#3a9c3a;transform:scaleX(0.953);transform-origin:0 0;">4.25 h</div>
<div class="t" style="left:480.2px;top:108.08px;font-size:7.7px;color:#3a9c3a;transform:scaleX(0.954);transform-origin:0 0;">0.00</div>
<svg class="ab" style="left:507.5px;top:104.55px;" width="140" height="12" viewBox="0 0 140 12"><g transform="translate(-664,0)">
<rect x="666.6" y="1.6" width="8.4" height="8.4" fill="#fff" stroke="#a8a8a8" stroke-width="0.8"/>
<path d="M697.6 2.2 L692.2 2.2 L691.4 3 L691.4 10.2 L695 10.2" fill="none" stroke="#c6c6c6" stroke-width="0.7"/>
<path d="M693.8 9.8 L699.2 2.2" stroke="#f0882a" stroke-width="1.9" fill="none" stroke-linecap="round"/>
<path d="M694.2 9.2 L698.6 2.9" stroke="#fde3c8" stroke-width="0.5" fill="none"/>
<circle cx="708" cy="3.4" r="1.9" fill="none" stroke="#c4c4c4" stroke-width="0.7"/>
<path d="M708 5.4 L708 7.2 M705.6 10.4 L706.6 7.6 L709.4 7.6 L710.4 10.4 M704.6 10.4 h2.4 M709 10.4 h2.4" fill="none" stroke="#c4c4c4" stroke-width="0.6"/>
<path d="M728.4 5.2 A4.5 4.5 0 0 1 736.2 3.6" fill="none" stroke="#28a08e" stroke-width="1.2"/>
<path d="M736.6 6.8 A4.5 4.5 0 0 1 728.8 8.4" fill="none" stroke="#28a08e" stroke-width="1.2"/>
<path d="M734.4 2.6 L737.8 2.2 L737 5.6 Z M730.6 9.4 L727.2 9.8 L728 6.4 Z" fill="#28a08e"/>
<circle cx="757" cy="6" r="4.1" fill="none" stroke="#e8636b" stroke-width="0.9"/>
<path d="M754.8 6 h4.4" stroke="#e8636b" stroke-width="1"/>
<rect x="765.2" y="1.8" width="9.4" height="6.6" rx="0.5" fill="none" stroke="#4a4a4a" stroke-width="0.95"/>
<path d="M768.2 10.2 h3.4 M769.9 8.4 v1.8" stroke="#4a4a4a" stroke-width="0.95"/>
<circle cx="789.3" cy="6" r="3.2" fill="none" stroke="#5a9ee0" stroke-width="0.95"/>
<path d="M787.6 2.9 L788 1.3 h2.6 L791 2.9 M787.6 9.1 L788 10.7 h2.6 L791 9.1" fill="none" stroke="#5a9ee0" stroke-width="0.8"/>
<path d="M789.3 4.4 V6.2 H790.6" fill="none" stroke="#5a9ee0" stroke-width="0.7"/>
</g></svg>
<div class="ab" style="left:0px;top:118.5px;width:644px;height:15.2px;background:#ffffff"></div>
<div class="ab" style="left:194.1px;top:118.5px;width:97.8px;height:15.2px;background:#fdf8e5"></div>
<div class="ab" style="left:0px;top:133.3px;width:644px;height:0.8px;background:#ebebeb"></div>
<div class="t" style="left:2.4px;top:123.98px;font-size:7.7px;color:#86b22c;font-style:italic;transform:scaleX(0.949);transform-origin:0 0;">Office</div>
<div class="t" style="left:99.3px;top:123.98px;font-size:7.7px;color:#86b22c;font-style:italic;transform:scaleX(0.991);transform-origin:0 0;">Mustermann Max</div>
<div class="t" style="left:196.8px;top:123.98px;font-size:7.7px;color:#86b22c;font-weight:bold;font-style:italic;transform:scaleX(1.035);transform-origin:0 0;">Pause</div>
<div class="t" style="left:300.54px;top:123.98px;font-size:7.7px;color:#86b22c;font-style:italic;transform:scaleX(0.927);transform-origin:0 0;">26.07.2016</div>
<div class="t" style="left:354.5px;top:123.98px;font-size:7.7px;color:#86b22c;font-style:italic;transform:scaleX(0.974);transform-origin:0 0;">12:15</div>
<div class="t" style="left:394.1px;top:123.98px;font-size:7.7px;color:#86b22c;font-style:italic;transform:scaleX(0.954);transform-origin:0 0;">13:15</div>
<div class="t" style="left:439.3px;top:123.98px;font-size:7.7px;color:#3a9c3a;font-style:italic;transform:scaleX(0.953);transform-origin:0 0;">1.00 h</div>
<div class="t" style="left:480.2px;top:123.98px;font-size:7.7px;color:#3a9c3a;font-style:italic;transform:scaleX(0.954);transform-origin:0 0;">0.00</div>
<svg class="ab" style="left:507.5px;top:120.1px;" width="140" height="12" viewBox="0 0 140 12"><g transform="translate(-664,0)">
<rect x="666.6" y="1.6" width="8.4" height="8.4" fill="#fff" stroke="#a8a8a8" stroke-width="0.8"/>
<path d="M697.6 2.2 L692.2 2.2 L691.4 3 L691.4 10.2 L695 10.2" fill="none" stroke="#c6c6c6" stroke-width="0.7"/>
<path d="M693.8 9.8 L699.2 2.2" stroke="#f0882a" stroke-width="1.9" fill="none" stroke-linecap="round"/>
<path d="M694.2 9.2 L698.6 2.9" stroke="#fde3c8" stroke-width="0.5" fill="none"/>
<circle cx="708" cy="3.4" r="1.9" fill="none" stroke="#c4c4c4" stroke-width="0.7"/>
<path d="M708 5.4 L708 7.2 M705.6 10.4 L706.6 7.6 L709.4 7.6 L710.4 10.4 M704.6 10.4 h2.4 M709 10.4 h2.4" fill="none" stroke="#c4c4c4" stroke-width="0.6"/>
<path d="M728.4 5.2 A4.5 4.5 0 0 1 736.2 3.6" fill="none" stroke="#28a08e" stroke-width="1.2"/>
<path d="M736.6 6.8 A4.5 4.5 0 0 1 728.8 8.4" fill="none" stroke="#28a08e" stroke-width="1.2"/>
<path d="M734.4 2.6 L737.8 2.2 L737 5.6 Z M730.6 9.4 L727.2 9.8 L728 6.4 Z" fill="#28a08e"/>
<circle cx="757" cy="6" r="4.1" fill="none" stroke="#e8636b" stroke-width="0.9"/>
<path d="M754.8 6 h4.4" stroke="#e8636b" stroke-width="1"/>
<rect x="765.2" y="1.8" width="9.4" height="6.6" rx="0.5" fill="none" stroke="#4a4a4a" stroke-width="0.95"/>
<path d="M768.2 10.2 h3.4 M769.9 8.4 v1.8" stroke="#4a4a4a" stroke-width="0.95"/>
<circle cx="789.3" cy="6" r="3.2" fill="none" stroke="#5a9ee0" stroke-width="0.95"/>
<path d="M787.6 2.9 L788 1.3 h2.6 L791 2.9 M787.6 9.1 L788 10.7 h2.6 L791 9.1" fill="none" stroke="#5a9ee0" stroke-width="0.8"/>
<path d="M789.3 4.4 V6.2 H790.6" fill="none" stroke="#5a9ee0" stroke-width="0.7"/>
</g></svg>
<div class="ab" style="left:0px;top:133.7px;width:644px;height:15.5px;background:#f6f6f4"></div>
<div class="ab" style="left:194.1px;top:133.7px;width:97.8px;height:15.5px;background:#fdf8e5"></div>
<div class="t" style="left:2.4px;top:139.18px;font-size:7.7px;color:#444;transform:scaleX(0.956);transform-origin:0 0;">Office</div>
<div class="t" style="left:99.3px;top:139.18px;font-size:7.7px;color:#444;transform:scaleX(0.995);transform-origin:0 0;">Mustermann Max</div>
<div class="t" style="left:196.8px;top:139.18px;font-size:7.7px;color:#222;font-weight:bold;transform:scaleX(0.992);transform-origin:0 0;">Arbeiten</div>
<div class="t" style="left:300.5px;top:139.18px;font-size:7.7px;color:#444;transform:scaleX(0.929);transform-origin:0 0;">26.07.2016</div>
<div class="t" style="left:354.5px;top:139.18px;font-size:7.7px;color:#444;transform:scaleX(0.975);transform-origin:0 0;">13:15</div>
<div class="t" style="left:394.1px;top:139.18px;font-size:7.7px;color:#444;transform:scaleX(0.955);transform-origin:0 0;">17:30</div>
<div class="t" style="left:439.3px;top:139.18px;font-size:7.7px;color:#3a9c3a;transform:scaleX(0.953);transform-origin:0 0;">4.25 h</div>
<div class="t" style="left:480.2px;top:139.18px;font-size:7.7px;color:#3a9c3a;transform:scaleX(0.954);transform-origin:0 0;">0.00</div>
<svg class="ab" style="left:507.5px;top:135.45px;" width="140" height="12" viewBox="0 0 140 12"><g transform="translate(-664,0)">
<rect x="666.6" y="1.6" width="8.4" height="8.4" fill="#fff" stroke="#a8a8a8" stroke-width="0.8"/>
<path d="M697.6 2.2 L692.2 2.2 L691.4 3 L691.4 10.2 L695 10.2" fill="none" stroke="#c6c6c6" stroke-width="0.7"/>
<path d="M693.8 9.8 L699.2 2.2" stroke="#f0882a" stroke-width="1.9" fill="none" stroke-linecap="round"/>
<path d="M694.2 9.2 L698.6 2.9" stroke="#fde3c8" stroke-width="0.5" fill="none"/>
<circle cx="708" cy="3.4" r="1.9" fill="none" stroke="#c4c4c4" stroke-width="0.7"/>
<path d="M708 5.4 L708 7.2 M705.6 10.4 L706.6 7.6 L709.4 7.6 L710.4 10.4 M704.6 10.4 h2.4 M709 10.4 h2.4" fill="none" stroke="#c4c4c4" stroke-width="0.6"/>
<path d="M728.4 5.2 A4.5 4.5 0 0 1 736.2 3.6" fill="none" stroke="#28a08e" stroke-width="1.2"/>
<path d="M736.6 6.8 A4.5 4.5 0 0 1 728.8 8.4" fill="none" stroke="#28a08e" stroke-width="1.2"/>
<path d="M734.4 2.6 L737.8 2.2 L737 5.6 Z M730.6 9.4 L727.2 9.8 L728 6.4 Z" fill="#28a08e"/>
<circle cx="757" cy="6" r="4.1" fill="none" stroke="#e8636b" stroke-width="0.9"/>
<path d="M754.8 6 h4.4" stroke="#e8636b" stroke-width="1"/>
<rect x="765.2" y="1.8" width="9.4" height="6.6" rx="0.5" fill="none" stroke="#4a4a4a" stroke-width="0.95"/>
<path d="M768.2 10.2 h3.4 M769.9 8.4 v1.8" stroke="#4a4a4a" stroke-width="0.95"/>
<circle cx="789.3" cy="6" r="3.2" fill="none" stroke="#5a9ee0" stroke-width="0.95"/>
<path d="M787.6 2.9 L788 1.3 h2.6 L791 2.9 M787.6 9.1 L788 10.7 h2.6 L791 9.1" fill="none" stroke="#5a9ee0" stroke-width="0.8"/>
<path d="M789.3 4.4 V6.2 H790.6" fill="none" stroke="#5a9ee0" stroke-width="0.7"/>
</g></svg>
<div class="ab" style="left:0px;top:102.2px;width:644px;height:0.9px;background:#dcdcdc"></div>
<div class="ab" style="left:0px;top:149.2px;width:644px;height:1.5px;background:#cfcfcf"></div>
<div class="ab" style="left:0px;top:150.7px;width:644px;height:15px;background:#d2e3f3"></div>
<div class="ab" style="left:194.1px;top:150.7px;width:97.8px;height:15px;background:#fdf8e5"></div>
<div class="t" style="left:442.5px;top:156.43px;font-size:6.1px;color:#2e9a2e;font-weight:bold;transform:scaleX(0.994);transform-origin:0 0;">8.50 h</div>
<div class="ab" style="left:0px;top:165.7px;width:644px;height:19.9px;background:#fff"></div>
<svg class="ab" style="left:2px;top:171.7px;" width="10" height="9" viewBox="0 0 10 9"><rect x="0.9" y="0.9" width="7" height="7" fill="#fff" stroke="#9a9a9a" stroke-width="0.8"/><path d="M2.4 4.4 h4" stroke="#888" stroke-width="0.8"/></svg>
<div class="t" style="left:14.3px;top:171.98px;font-size:9.59px;color:#444;transform:scaleX(0.908);transform-origin:0 0;">Datum: 27.07.2016 (3 Elemente)</div>
<div class="ab" style="left:0px;top:185.6px;width:644px;height:15.9px;background:#ffffff"></div>
<div class="ab" style="left:194.1px;top:185.6px;width:97.8px;height:15.9px;background:#fdf8e5"></div>
<div class="ab" style="left:0px;top:201.1px;width:644px;height:0.8px;background:#ebebeb"></div>
<div class="t" style="left:2.4px;top:191.08px;font-size:7.7px;color:#444;transform:scaleX(0.956);transform-origin:0 0;">Office</div>
<div class="t" style="left:99.3px;top:191.08px;font-size:7.7px;color:#444;transform:scaleX(0.995);transform-origin:0 0;">Mustermann Max</div>
<div class="t" style="left:196.8px;top:191.08px;font-size:7.7px;color:#222;font-weight:bold;transform:scaleX(0.992);transform-origin:0 0;">Arbeiten</div>
<div class="t" style="left:300.5px;top:191.08px;font-size:7.7px;color:#444;transform:scaleX(0.929);transform-origin:0 0;">27.07.2016</div>
<div class="t" style="left:354.5px;top:191.08px;font-size:7.7px;color:#444;transform:scaleX(0.975);transform-origin:0 0;">08:00</div>
<div class="t" style="left:394.1px;top:191.08px;font-size:7.7px;color:#444;transform:scaleX(0.955);transform-origin:0 0;">12:15</div>
<div class="t" style="left:439.3px;top:191.08px;font-size:7.7px;color:#3a9c3a;transform:scaleX(0.953);transform-origin:0 0;">4.25 h</div>
<div class="t" style="left:480.2px;top:191.08px;font-size:7.7px;color:#3a9c3a;transform:scaleX(0.954);transform-origin:0 0;">0.00</div>
<svg class="ab" style="left:507.5px;top:187.55px;" width="140" height="12" viewBox="0 0 140 12"><g transform="translate(-664,0)">
<rect x="666.6" y="1.6" width="8.4" height="8.4" fill="#fff" stroke="#a8a8a8" stroke-width="0.8"/>
<path d="M697.6 2.2 L692.2 2.2 L691.4 3 L691.4 10.2 L695 10.2" fill="none" stroke="#c6c6c6" stroke-width="0.7"/>
<path d="M693.8 9.8 L699.2 2.2" stroke="#f0882a" stroke-width="1.9" fill="none" stroke-linecap="round"/>
<path d="M694.2 9.2 L698.6 2.9" stroke="#fde3c8" stroke-width="0.5" fill="none"/>
<circle cx="708" cy="3.4" r="1.9" fill="none" stroke="#c4c4c4" stroke-width="0.7"/>
<path d="M708 5.4 L708 7.2 M705.6 10.4 L706.6 7.6 L709.4 7.6 L710.4 10.4 M704.6 10.4 h2.4 M709 10.4 h2.4" fill="none" stroke="#c4c4c4" stroke-width="0.6"/>
<path d="M728.4 5.2 A4.5 4.5 0 0 1 736.2 3.6" fill="none" stroke="#28a08e" stroke-width="1.2"/>
<path d="M736.6 6.8 A4.5 4.5 0 0 1 728.8 8.4" fill="none" stroke="#28a08e" stroke-width="1.2"/>
<path d="M734.4 2.6 L737.8 2.2 L737 5.6 Z M730.6 9.4 L727.2 9.8 L728 6.4 Z" fill="#28a08e"/>
<circle cx="757" cy="6" r="4.1" fill="none" stroke="#e8636b" stroke-width="0.9"/>
<path d="M754.8 6 h4.4" stroke="#e8636b" stroke-width="1"/>
<rect x="765.2" y="1.8" width="9.4" height="6.6" rx="0.5" fill="none" stroke="#4a4a4a" stroke-width="0.95"/>
<path d="M768.2 10.2 h3.4 M769.9 8.4 v1.8" stroke="#4a4a4a" stroke-width="0.95"/>
<circle cx="789.3" cy="6" r="3.2" fill="none" stroke="#5a9ee0" stroke-width="0.95"/>
<path d="M787.6 2.9 L788 1.3 h2.6 L791 2.9 M787.6 9.1 L788 10.7 h2.6 L791 9.1" fill="none" stroke="#5a9ee0" stroke-width="0.8"/>
<path d="M789.3 4.4 V6.2 H790.6" fill="none" stroke="#5a9ee0" stroke-width="0.7"/>
</g></svg>
<div class="ab" style="left:0px;top:201.5px;width:644px;height:15.2px;background:#f6f6f4"></div>
<div class="ab" style="left:194.1px;top:201.5px;width:97.8px;height:15.2px;background:#fdf8e5"></div>
<div class="ab" style="left:0px;top:216.3px;width:644px;height:0.8px;background:#ebebeb"></div>
<div class="t" style="left:2.4px;top:206.98px;font-size:7.7px;color:#86b22c;font-style:italic;transform:scaleX(0.949);transform-origin:0 0;">Office</div>
<div class="t" style="left:99.3px;top:206.98px;font-size:7.7px;color:#86b22c;font-style:italic;transform:scaleX(0.991);transform-origin:0 0;">Mustermann Max</div>
<div class="t" style="left:196.8px;top:206.98px;font-size:7.7px;color:#86b22c;font-weight:bold;font-style:italic;transform:scaleX(1.035);transform-origin:0 0;">Pause</div>
<div class="t" style="left:300.54px;top:206.98px;font-size:7.7px;color:#86b22c;font-style:italic;transform:scaleX(0.927);transform-origin:0 0;">27.07.2016</div>
<div class="t" style="left:354.5px;top:206.98px;font-size:7.7px;color:#86b22c;font-style:italic;transform:scaleX(0.974);transform-origin:0 0;">12:15</div>
<div class="t" style="left:394.1px;top:206.98px;font-size:7.7px;color:#86b22c;font-style:italic;transform:scaleX(0.954);transform-origin:0 0;">13:15</div>
<div class="t" style="left:439.3px;top:206.98px;font-size:7.7px;color:#3a9c3a;font-style:italic;transform:scaleX(0.953);transform-origin:0 0;">1.00 h</div>
<div class="t" style="left:480.2px;top:206.98px;font-size:7.7px;color:#3a9c3a;font-style:italic;transform:scaleX(0.954);transform-origin:0 0;">0.00</div>
<svg class="ab" style="left:507.5px;top:203.1px;" width="140" height="12" viewBox="0 0 140 12"><g transform="translate(-664,0)">
<rect x="666.6" y="1.6" width="8.4" height="8.4" fill="#fff" stroke="#a8a8a8" stroke-width="0.8"/>
<path d="M697.6 2.2 L692.2 2.2 L691.4 3 L691.4 10.2 L695 10.2" fill="none" stroke="#c6c6c6" stroke-width="0.7"/>
<path d="M693.8 9.8 L699.2 2.2" stroke="#f0882a" stroke-width="1.9" fill="none" stroke-linecap="round"/>
<path d="M694.2 9.2 L698.6 2.9" stroke="#fde3c8" stroke-width="0.5" fill="none"/>
<circle cx="708" cy="3.4" r="1.9" fill="none" stroke="#c4c4c4" stroke-width="0.7"/>
<path d="M708 5.4 L708 7.2 M705.6 10.4 L706.6 7.6 L709.4 7.6 L710.4 10.4 M704.6 10.4 h2.4 M709 10.4 h2.4" fill="none" stroke="#c4c4c4" stroke-width="0.6"/>
<path d="M728.4 5.2 A4.5 4.5 0 0 1 736.2 3.6" fill="none" stroke="#28a08e" stroke-width="1.2"/>
<path d="M736.6 6.8 A4.5 4.5 0 0 1 728.8 8.4" fill="none" stroke="#28a08e" stroke-width="1.2"/>
<path d="M734.4 2.6 L737.8 2.2 L737 5.6 Z M730.6 9.4 L727.2 9.8 L728 6.4 Z" fill="#28a08e"/>
<circle cx="757" cy="6" r="4.1" fill="none" stroke="#e8636b" stroke-width="0.9"/>
<path d="M754.8 6 h4.4" stroke="#e8636b" stroke-width="1"/>
<rect x="765.2" y="1.8" width="9.4" height="6.6" rx="0.5" fill="none" stroke="#4a4a4a" stroke-width="0.95"/>
<path d="M768.2 10.2 h3.4 M769.9 8.4 v1.8" stroke="#4a4a4a" stroke-width="0.95"/>
<circle cx="789.3" cy="6" r="3.2" fill="none" stroke="#5a9ee0" stroke-width="0.95"/>
<path d="M787.6 2.9 L788 1.3 h2.6 L791 2.9 M787.6 9.1 L788 10.7 h2.6 L791 9.1" fill="none" stroke="#5a9ee0" stroke-width="0.8"/>
<path d="M789.3 4.4 V6.2 H790.6" fill="none" stroke="#5a9ee0" stroke-width="0.7"/>
</g></svg>
<div class="ab" style="left:0px;top:216.7px;width:644px;height:15.5px;background:#ffffff"></div>
<div class="ab" style="left:194.1px;top:216.7px;width:97.8px;height:15.5px;background:#fdf8e5"></div>
<div class="t" style="left:2.4px;top:222.18px;font-size:7.7px;color:#444;transform:scaleX(0.956);transform-origin:0 0;">Office</div>
<div class="t" style="left:99.3px;top:222.18px;font-size:7.7px;color:#444;transform:scaleX(0.995);transform-origin:0 0;">Mustermann Max</div>
<div class="t" style="left:196.8px;top:222.18px;font-size:7.7px;color:#222;font-weight:bold;transform:scaleX(0.992);transform-origin:0 0;">Arbeiten</div>
<div class="t" style="left:300.5px;top:222.18px;font-size:7.7px;color:#444;transform:scaleX(0.929);transform-origin:0 0;">27.07.2016</div>
<div class="t" style="left:354.5px;top:222.18px;font-size:7.7px;color:#444;transform:scaleX(0.975);transform-origin:0 0;">13:15</div>
<div class="t" style="left:394.1px;top:222.18px;font-size:7.7px;color:#444;transform:scaleX(0.955);transform-origin:0 0;">17:30</div>
<div class="t" style="left:439.3px;top:222.18px;font-size:7.7px;color:#3a9c3a;transform:scaleX(0.953);transform-origin:0 0;">4.25 h</div>
<div class="t" style="left:480.2px;top:222.18px;font-size:7.7px;color:#3a9c3a;transform:scaleX(0.954);transform-origin:0 0;">0.00</div>
<svg class="ab" style="left:507.5px;top:218.45px;" width="140" height="12" viewBox="0 0 140 12"><g transform="translate(-664,0)">
<rect x="666.6" y="1.6" width="8.4" height="8.4" fill="#fff" stroke="#a8a8a8" stroke-width="0.8"/>
<path d="M697.6 2.2 L692.2 2.2 L691.4 3 L691.4 10.2 L695 10.2" fill="none" stroke="#c6c6c6" stroke-width="0.7"/>
<path d="M693.8 9.8 L699.2 2.2" stroke="#f0882a" stroke-width="1.9" fill="none" stroke-linecap="round"/>
<path d="M694.2 9.2 L698.6 2.9" stroke="#fde3c8" stroke-width="0.5" fill="none"/>
<circle cx="708" cy="3.4" r="1.9" fill="none" stroke="#c4c4c4" stroke-width="0.7"/>
<path d="M708 5.4 L708 7.2 M705.6 10.4 L706.6 7.6 L709.4 7.6 L710.4 10.4 M704.6 10.4 h2.4 M709 10.4 h2.4" fill="none" stroke="#c4c4c4" stroke-width="0.6"/>
<path d="M728.4 5.2 A4.5 4.5 0 0 1 736.2 3.6" fill="none" stroke="#28a08e" stroke-width="1.2"/>
<path d="M736.6 6.8 A4.5 4.5 0 0 1 728.8 8.4" fill="none" stroke="#28a08e" stroke-width="1.2"/>
<path d="M734.4 2.6 L737.8 2.2 L737 5.6 Z M730.6 9.4 L727.2 9.8 L728 6.4 Z" fill="#28a08e"/>
<circle cx="757" cy="6" r="4.1" fill="none" stroke="#e8636b" stroke-width="0.9"/>
<path d="M754.8 6 h4.4" stroke="#e8636b" stroke-width="1"/>
<rect x="765.2" y="1.8" width="9.4" height="6.6" rx="0.5" fill="none" stroke="#4a4a4a" stroke-width="0.95"/>
<path d="M768.2 10.2 h3.4 M769.9 8.4 v1.8" stroke="#4a4a4a" stroke-width="0.95"/>
<circle cx="789.3" cy="6" r="3.2" fill="none" stroke="#5a9ee0" stroke-width="0.95"/>
<path d="M787.6 2.9 L788 1.3 h2.6 L791 2.9 M787.6 9.1 L788 10.7 h2.6 L791 9.1" fill="none" stroke="#5a9ee0" stroke-width="0.8"/>
<path d="M789.3 4.4 V6.2 H790.6" fill="none" stroke="#5a9ee0" stroke-width="0.7"/>
</g></svg>
<div class="ab" style="left:0px;top:185.2px;width:644px;height:0.9px;background:#dcdcdc"></div>
<div class="ab" style="left:0px;top:232.2px;width:644px;height:1.5px;background:#cfcfcf"></div>
<div class="ab" style="left:0px;top:233.7px;width:644px;height:15px;background:#d2e3f3"></div>
<div class="ab" style="left:194.1px;top:233.7px;width:97.8px;height:15px;background:#fdf8e5"></div>
<div class="t" style="left:442.5px;top:239.43px;font-size:6.1px;color:#2e9a2e;font-weight:bold;transform:scaleX(0.994);transform-origin:0 0;">8.50 h</div>
<div class="ab" style="left:0px;top:248.7px;width:644px;height:19.9px;background:#fff"></div>
<svg class="ab" style="left:2px;top:254.7px;" width="10" height="9" viewBox="0 0 10 9"><rect x="0.9" y="0.9" width="7" height="7" fill="#fff" stroke="#9a9a9a" stroke-width="0.8"/><path d="M2.4 4.4 h4" stroke="#888" stroke-width="0.8"/></svg>
<div class="t" style="left:14.3px;top:254.98px;font-size:9.59px;color:#444;transform:scaleX(0.908);transform-origin:0 0;">Datum: 28.07.2016 (3 Elemente)</div>
<div class="ab" style="left:0px;top:268.6px;width:644px;height:15.9px;background:#f6f6f4"></div>
<div class="ab" style="left:194.1px;top:268.6px;width:97.8px;height:15.9px;background:#fdf8e5"></div>
<div class="ab" style="left:0px;top:284.1px;width:644px;height:0.8px;background:#ebebeb"></div>
<div class="t" style="left:2.4px;top:274.08px;font-size:7.7px;color:#444;transform:scaleX(0.956);transform-origin:0 0;">Office</div>
<div class="t" style="left:99.3px;top:274.08px;font-size:7.7px;color:#444;transform:scaleX(0.995);transform-origin:0 0;">Mustermann Max</div>
<div class="t" style="left:196.8px;top:274.08px;font-size:7.7px;color:#222;font-weight:bold;transform:scaleX(0.992);transform-origin:0 0;">Arbeiten</div>
<div class="t" style="left:300.5px;top:274.08px;font-size:7.7px;color:#444;transform:scaleX(0.929);transform-origin:0 0;">28.07.2016</div>
<div class="t" style="left:354.5px;top:274.08px;font-size:7.7px;color:#444;transform:scaleX(0.975);transform-origin:0 0;">08:00</div>
<div class="t" style="left:394.1px;top:274.08px;font-size:7.7px;color:#444;transform:scaleX(0.955);transform-origin:0 0;">12:00</div>
<div class="t" style="left:439.3px;top:274.08px;font-size:7.7px;color:#3a9c3a;transform:scaleX(0.953);transform-origin:0 0;">4.00 h</div>
<div class="t" style="left:480.2px;top:274.08px;font-size:7.7px;color:#3a9c3a;transform:scaleX(0.954);transform-origin:0 0;">0.00</div>
<svg class="ab" style="left:507.5px;top:270.55px;" width="140" height="12" viewBox="0 0 140 12"><g transform="translate(-664,0)">
<rect x="666.6" y="1.6" width="8.4" height="8.4" fill="#fff" stroke="#a8a8a8" stroke-width="0.8"/>
<path d="M697.6 2.2 L692.2 2.2 L691.4 3 L691.4 10.2 L695 10.2" fill="none" stroke="#c6c6c6" stroke-width="0.7"/>
<path d="M693.8 9.8 L699.2 2.2" stroke="#f0882a" stroke-width="1.9" fill="none" stroke-linecap="round"/>
<path d="M694.2 9.2 L698.6 2.9" stroke="#fde3c8" stroke-width="0.5" fill="none"/>
<circle cx="708" cy="3.4" r="1.9" fill="none" stroke="#c4c4c4" stroke-width="0.7"/>
<path d="M708 5.4 L708 7.2 M705.6 10.4 L706.6 7.6 L709.4 7.6 L710.4 10.4 M704.6 10.4 h2.4 M709 10.4 h2.4" fill="none" stroke="#c4c4c4" stroke-width="0.6"/>
<path d="M728.4 5.2 A4.5 4.5 0 0 1 736.2 3.6" fill="none" stroke="#28a08e" stroke-width="1.2"/>
<path d="M736.6 6.8 A4.5 4.5 0 0 1 728.8 8.4" fill="none" stroke="#28a08e" stroke-width="1.2"/>
<path d="M734.4 2.6 L737.8 2.2 L737 5.6 Z M730.6 9.4 L727.2 9.8 L728 6.4 Z" fill="#28a08e"/>
<circle cx="757" cy="6" r="4.1" fill="none" stroke="#e8636b" stroke-width="0.9"/>
<path d="M754.8 6 h4.4" stroke="#e8636b" stroke-width="1"/>
<rect x="765.2" y="1.8" width="9.4" height="6.6" rx="0.5" fill="none" stroke="#4a4a4a" stroke-width="0.95"/>
<path d="M768.2 10.2 h3.4 M769.9 8.4 v1.8" stroke="#4a4a4a" stroke-width="0.95"/>
<circle cx="789.3" cy="6" r="3.2" fill="none" stroke="#5a9ee0" stroke-width="0.95"/>
<path d="M787.6 2.9 L788 1.3 h2.6 L791 2.9 M787.6 9.1 L788 10.7 h2.6 L791 9.1" fill="none" stroke="#5a9ee0" stroke-width="0.8"/>
<path d="M789.3 4.4 V6.2 H790.6" fill="none" stroke="#5a9ee0" stroke-width="0.7"/>
</g></svg>
<div class="ab" style="left:0px;top:284.5px;width:644px;height:15.2px;background:#ffffff"></div>
<div class="ab" style="left:194.1px;top:284.5px;width:97.8px;height:15.2px;background:#fdf8e5"></div>
<div class="ab" style="left:0px;top:299.3px;width:644px;height:0.8px;background:#ebebeb"></div>
<div class="t" style="left:2.4px;top:289.98px;font-size:7.7px;color:#86b22c;font-style:italic;transform:scaleX(0.949);transform-origin:0 0;">Office</div>
<div class="t" style="left:99.3px;top:289.98px;font-size:7.7px;color:#86b22c;font-style:italic;transform:scaleX(0.991);transform-origin:0 0;">Mustermann Max</div>
<div class="t" style="left:196.8px;top:289.98px;font-size:7.7px;color:#86b22c;font-weight:bold;font-style:italic;transform:scaleX(1.035);transform-origin:0 0;">Pause</div>
<div class="t" style="left:300.54px;top:289.98px;font-size:7.7px;color:#86b22c;font-style:italic;transform:scaleX(0.927);transform-origin:0 0;">28.07.2016</div>
<div class="t" style="left:354.5px;top:289.98px;font-size:7.7px;color:#86b22c;font-style:italic;transform:scaleX(0.975);transform-origin:0 0;">12:00</div>
<div class="t" style="left:394.1px;top:289.98px;font-size:7.7px;color:#86b22c;font-style:italic;transform:scaleX(0.955);transform-origin:0 0;">13:00</div>
<div class="t" style="left:439.3px;top:289.98px;font-size:7.7px;color:#3a9c3a;font-style:italic;transform:scaleX(0.953);transform-origin:0 0;">1.00 h</div>
<div class="t" style="left:480.2px;top:289.98px;font-size:7.7px;color:#3a9c3a;font-style:italic;transform:scaleX(0.954);transform-origin:0 0;">0.00</div>
<svg class="ab" style="left:507.5px;top:286.1px;" width="140" height="12" viewBox="0 0 140 12"><g transform="translate(-664,0)">
<rect x="666.6" y="1.6" width="8.4" height="8.4" fill="#fff" stroke="#a8a8a8" stroke-width="0.8"/>
<path d="M697.6 2.2 L692.2 2.2 L691.4 3 L691.4 10.2 L695 10.2" fill="none" stroke="#c6c6c6" stroke-width="0.7"/>
<path d="M693.8 9.8 L699.2 2.2" stroke="#f0882a" stroke-width="1.9" fill="none" stroke-linecap="round"/>
<path d="M694.2 9.2 L698.6 2.9" stroke="#fde3c8" stroke-width="0.5" fill="none"/>
<circle cx="708" cy="3.4" r="1.9" fill="none" stroke="#c4c4c4" stroke-width="0.7"/>
<path d="M708 5.4 L708 7.2 M705.6 10.4 L706.6 7.6 L709.4 7.6 L710.4 10.4 M704.6 10.4 h2.4 M709 10.4 h2.4" fill="none" stroke="#c4c4c4" stroke-width="0.6"/>
<path d="M728.4 5.2 A4.5 4.5 0 0 1 736.2 3.6" fill="none" stroke="#28a08e" stroke-width="1.2"/>
<path d="M736.6 6.8 A4.5 4.5 0 0 1 728.8 8.4" fill="none" stroke="#28a08e" stroke-width="1.2"/>
<path d="M734.4 2.6 L737.8 2.2 L737 5.6 Z M730.6 9.4 L727.2 9.8 L728 6.4 Z" fill="#28a08e"/>
<circle cx="757" cy="6" r="4.1" fill="none" stroke="#e8636b" stroke-width="0.9"/>
<path d="M754.8 6 h4.4" stroke="#e8636b" stroke-width="1"/>
<rect x="765.2" y="1.8" width="9.4" height="6.6" rx="0.5" fill="none" stroke="#4a4a4a" stroke-width="0.95"/>
<path d="M768.2 10.2 h3.4 M769.9 8.4 v1.8" stroke="#4a4a4a" stroke-width="0.95"/>
<circle cx="789.3" cy="6" r="3.2" fill="none" stroke="#5a9ee0" stroke-width="0.95"/>
<path d="M787.6 2.9 L788 1.3 h2.6 L791 2.9 M787.6 9.1 L788 10.7 h2.6 L791 9.1" fill="none" stroke="#5a9ee0" stroke-width="0.8"/>
<path d="M789.3 4.4 V6.2 H790.6" fill="none" stroke="#5a9ee0" stroke-width="0.7"/>
</g></svg>
<div class="ab" style="left:0px;top:299.7px;width:644px;height:15.5px;background:#f6f6f4"></div>
<div class="ab" style="left:194.1px;top:299.7px;width:97.8px;height:15.5px;background:#fdf8e5"></div>
<div class="t" style="left:2.4px;top:305.18px;font-size:7.7px;color:#444;transform:scaleX(0.956);transform-origin:0 0;">Office</div>
<div class="t" style="left:99.3px;top:305.18px;font-size:7.7px;color:#444;transform:scaleX(0.995);transform-origin:0 0;">Mustermann Max</div>
<div class="t" style="left:196.8px;top:305.18px;font-size:7.7px;color:#222;font-weight:bold;transform:scaleX(0.992);transform-origin:0 0;">Arbeiten</div>
<div class="t" style="left:300.5px;top:305.18px;font-size:7.7px;color:#444;transform:scaleX(0.929);transform-origin:0 0;">28.07.2016</div>
<div class="t" style="left:354.5px;top:305.18px;font-size:7.7px;color:#444;transform:scaleX(0.975);transform-origin:0 0;">13:00</div>
<div class="t" style="left:394.1px;top:305.18px;font-size:7.7px;color:#444;transform:scaleX(0.955);transform-origin:0 0;">17:00</div>
<div class="t" style="left:439.3px;top:305.18px;font-size:7.7px;color:#3a9c3a;transform:scaleX(0.953);transform-origin:0 0;">4.00 h</div>
<div class="t" style="left:480.2px;top:305.18px;font-size:7.7px;color:#3a9c3a;transform:scaleX(0.954);transform-origin:0 0;">0.00</div>
<svg class="ab" style="left:507.5px;top:301.45px;" width="140" height="12" viewBox="0 0 140 12"><g transform="translate(-664,0)">
<rect x="666.6" y="1.6" width="8.4" height="8.4" fill="#fff" stroke="#a8a8a8" stroke-width="0.8"/>
<path d="M697.6 2.2 L692.2 2.2 L691.4 3 L691.4 10.2 L695 10.2" fill="none" stroke="#c6c6c6" stroke-width="0.7"/>
<path d="M693.8 9.8 L699.2 2.2" stroke="#f0882a" stroke-width="1.9" fill="none" stroke-linecap="round"/>
<path d="M694.2 9.2 L698.6 2.9" stroke="#fde3c8" stroke-width="0.5" fill="none"/>
<circle cx="708" cy="3.4" r="1.9" fill="none" stroke="#c4c4c4" stroke-width="0.7"/>
<path d="M708 5.4 L708 7.2 M705.6 10.4 L706.6 7.6 L709.4 7.6 L710.4 10.4 M704.6 10.4 h2.4 M709 10.4 h2.4" fill="none" stroke="#c4c4c4" stroke-width="0.6"/>
<path d="M728.4 5.2 A4.5 4.5 0 0 1 736.2 3.6" fill="none" stroke="#28a08e" stroke-width="1.2"/>
<path d="M736.6 6.8 A4.5 4.5 0 0 1 728.8 8.4" fill="none" stroke="#28a08e" stroke-width="1.2"/>
<path d="M734.4 2.6 L737.8 2.2 L737 5.6 Z M730.6 9.4 L727.2 9.8 L728 6.4 Z" fill="#28a08e"/>
<circle cx="757" cy="6" r="4.1" fill="none" stroke="#e8636b" stroke-width="0.9"/>
<path d="M754.8 6 h4.4" stroke="#e8636b" stroke-width="1"/>
<rect x="765.2" y="1.8" width="9.4" height="6.6" rx="0.5" fill="none" stroke="#4a4a4a" stroke-width="0.95"/>
<path d="M768.2 10.2 h3.4 M769.9 8.4 v1.8" stroke="#4a4a4a" stroke-width="0.95"/>
<circle cx="789.3" cy="6" r="3.2" fill="none" stroke="#5a9ee0" stroke-width="0.95"/>
<path d="M787.6 2.9 L788 1.3 h2.6 L791 2.9 M787.6 9.1 L788 10.7 h2.6 L791 9.1" fill="none" stroke="#5a9ee0" stroke-width="0.8"/>
<path d="M789.3 4.4 V6.2 H790.6" fill="none" stroke="#5a9ee0" stroke-width="0.7"/>
</g></svg>
<div class="ab" style="left:0px;top:268.2px;width:644px;height:0.9px;background:#dcdcdc"></div>
<div class="ab" style="left:0px;top:315.2px;width:644px;height:1.5px;background:#cfcfcf"></div>
<div class="ab" style="left:0px;top:316.7px;width:644px;height:15px;background:#d2e3f3"></div>
<div class="ab" style="left:194.1px;top:316.7px;width:97.8px;height:15px;background:#fdf8e5"></div>
<div class="t" style="left:442.5px;top:322.43px;font-size:6.1px;color:#2e9a2e;font-weight:bold;transform:scaleX(0.994);transform-origin:0 0;">8.00 h</div>
<div class="ab" style="left:0px;top:331.7px;width:644px;height:19.9px;background:#fff"></div>
<svg class="ab" style="left:2px;top:337.7px;" width="10" height="9" viewBox="0 0 10 9"><rect x="0.9" y="0.9" width="7" height="7" fill="#fff" stroke="#9a9a9a" stroke-width="0.8"/><path d="M2.4 4.4 h4" stroke="#888" stroke-width="0.8"/></svg>
<div class="t" style="left:14.3px;top:337.98px;font-size:9.59px;color:#444;transform:scaleX(0.908);transform-origin:0 0;">Datum: 29.07.2016 (3 Elemente)</div>
<div class="ab" style="left:0px;top:351.6px;width:644px;height:15.9px;background:#ffffff"></div>
<div class="ab" style="left:194.1px;top:351.6px;width:97.8px;height:15.9px;background:#fdf8e5"></div>
<div class="ab" style="left:0px;top:367.1px;width:644px;height:0.8px;background:#ebebeb"></div>
<div class="t" style="left:2.4px;top:357.08px;font-size:7.7px;color:#444;transform:scaleX(0.956);transform-origin:0 0;">Office</div>
<div class="t" style="left:99.3px;top:357.08px;font-size:7.7px;color:#444;transform:scaleX(0.995);transform-origin:0 0;">Mustermann Max</div>
<div class="t" style="left:196.8px;top:357.08px;font-size:7.7px;color:#222;font-weight:bold;transform:scaleX(0.992);transform-origin:0 0;">Arbeiten</div>
<div class="t" style="left:300.5px;top:357.08px;font-size:7.7px;color:#444;transform:scaleX(0.929);transform-origin:0 0;">29.07.2016</div>
<div class="t" style="left:354.5px;top:357.08px;font-size:7.7px;color:#444;transform:scaleX(0.975);transform-origin:0 0;">08:00</div>
<div class="t" style="left:394.1px;top:357.08px;font-size:7.7px;color:#444;transform:scaleX(0.984);transform-origin:0 0;">11:30</div>
<div class="t" style="left:439.3px;top:357.08px;font-size:7.7px;color:#3a9c3a;transform:scaleX(0.953);transform-origin:0 0;">3.50 h</div>
<div class="t" style="left:480.2px;top:357.08px;font-size:7.7px;color:#3a9c3a;transform:scaleX(0.954);transform-origin:0 0;">0.00</div>
<svg class="ab" style="left:507.5px;top:353.55px;" width="140" height="12" viewBox="0 0 140 12"><g transform="translate(-664,0)">
<rect x="666.6" y="1.6" width="8.4" height="8.4" fill="#fff" stroke="#a8a8a8" stroke-width="0.8"/>
<path d="M697.6 2.2 L692.2 2.2 L691.4 3 L691.4 10.2 L695 10.2" fill="none" stroke="#c6c6c6" stroke-width="0.7"/>
<path d="M693.8 9.8 L699.2 2.2" stroke="#f0882a" stroke-width="1.9" fill="none" stroke-linecap="round"/>
<path d="M694.2 9.2 L698.6 2.9" stroke="#fde3c8" stroke-width="0.5" fill="none"/>
<circle cx="708" cy="3.4" r="1.9" fill="none" stroke="#c4c4c4" stroke-width="0.7"/>
<path d="M708 5.4 L708 7.2 M705.6 10.4 L706.6 7.6 L709.4 7.6 L710.4 10.4 M704.6 10.4 h2.4 M709 10.4 h2.4" fill="none" stroke="#c4c4c4" stroke-width="0.6"/>
<path d="M728.4 5.2 A4.5 4.5 0 0 1 736.2 3.6" fill="none" stroke="#28a08e" stroke-width="1.2"/>
<path d="M736.6 6.8 A4.5 4.5 0 0 1 728.8 8.4" fill="none" stroke="#28a08e" stroke-width="1.2"/>
<path d="M734.4 2.6 L737.8 2.2 L737 5.6 Z M730.6 9.4 L727.2 9.8 L728 6.4 Z" fill="#28a08e"/>
<circle cx="757" cy="6" r="4.1" fill="none" stroke="#e8636b" stroke-width="0.9"/>
<path d="M754.8 6 h4.4" stroke="#e8636b" stroke-width="1"/>
<rect x="765.2" y="1.8" width="9.4" height="6.6" rx="0.5" fill="none" stroke="#4a4a4a" stroke-width="0.95"/>
<path d="M768.2 10.2 h3.4 M769.9 8.4 v1.8" stroke="#4a4a4a" stroke-width="0.95"/>
<circle cx="789.3" cy="6" r="3.2" fill="none" stroke="#5a9ee0" stroke-width="0.95"/>
<path d="M787.6 2.9 L788 1.3 h2.6 L791 2.9 M787.6 9.1 L788 10.7 h2.6 L791 9.1" fill="none" stroke="#5a9ee0" stroke-width="0.8"/>
<path d="M789.3 4.4 V6.2 H790.6" fill="none" stroke="#5a9ee0" stroke-width="0.7"/>
</g></svg>
<div class="ab" style="left:0px;top:367.5px;width:644px;height:15.2px;background:#f6f6f4"></div>
<div class="ab" style="left:194.1px;top:367.5px;width:97.8px;height:15.2px;background:#fdf8e5"></div>
<div class="ab" style="left:0px;top:382.3px;width:644px;height:0.8px;background:#ebebeb"></div>
<div class="t" style="left:2.4px;top:372.98px;font-size:7.7px;color:#86b22c;font-style:italic;transform:scaleX(0.949);transform-origin:0 0;">Office</div>
<div class="t" style="left:99.3px;top:372.98px;font-size:7.7px;color:#86b22c;font-style:italic;transform:scaleX(0.991);transform-origin:0 0;">Mustermann Max</div>
<div class="t" style="left:196.8px;top:372.98px;font-size:7.7px;color:#86b22c;font-weight:bold;font-style:italic;transform:scaleX(1.035);transform-origin:0 0;">Pause</div>
<div class="t" style="left:300.54px;top:372.98px;font-size:7.7px;color:#86b22c;font-style:italic;transform:scaleX(0.927);transform-origin:0 0;">29.07.2016</div>
<div class="t" style="left:354.5px;top:372.98px;font-size:7.7px;color:#86b22c;font-style:italic;transform:scaleX(1.005);transform-origin:0 0;">11:30</div>
<div class="t" style="left:394.1px;top:372.98px;font-size:7.7px;color:#86b22c;font-style:italic;transform:scaleX(0.955);transform-origin:0 0;">12:00</div>
<div class="t" style="left:439.3px;top:372.98px;font-size:7.7px;color:#3a9c3a;font-style:italic;transform:scaleX(0.953);transform-origin:0 0;">0.50 h</div>
<div class="t" style="left:480.2px;top:372.98px;font-size:7.7px;color:#3a9c3a;font-style:italic;transform:scaleX(0.954);transform-origin:0 0;">0.00</div>
<svg class="ab" style="left:507.5px;top:369.1px;" width="140" height="12" viewBox="0 0 140 12"><g transform="translate(-664,0)">
<rect x="666.6" y="1.6" width="8.4" height="8.4" fill="#fff" stroke="#a8a8a8" stroke-width="0.8"/>
<path d="M697.6 2.2 L692.2 2.2 L691.4 3 L691.4 10.2 L695 10.2" fill="none" stroke="#c6c6c6" stroke-width="0.7"/>
<path d="M693.8 9.8 L699.2 2.2" stroke="#f0882a" stroke-width="1.9" fill="none" stroke-linecap="round"/>
<path d="M694.2 9.2 L698.6 2.9" stroke="#fde3c8" stroke-width="0.5" fill="none"/>
<circle cx="708" cy="3.4" r="1.9" fill="none" stroke="#c4c4c4" stroke-width="0.7"/>
<path d="M708 5.4 L708 7.2 M705.6 10.4 L706.6 7.6 L709.4 7.6 L710.4 10.4 M704.6 10.4 h2.4 M709 10.4 h2.4" fill="none" stroke="#c4c4c4" stroke-width="0.6"/>
<path d="M728.4 5.2 A4.5 4.5 0 0 1 736.2 3.6" fill="none" stroke="#28a08e" stroke-width="1.2"/>
<path d="M736.6 6.8 A4.5 4.5 0 0 1 728.8 8.4" fill="none" stroke="#28a08e" stroke-width="1.2"/>
<path d="M734.4 2.6 L737.8 2.2 L737 5.6 Z M730.6 9.4 L727.2 9.8 L728 6.4 Z" fill="#28a08e"/>
<circle cx="757" cy="6" r="4.1" fill="none" stroke="#e8636b" stroke-width="0.9"/>
<path d="M754.8 6 h4.4" stroke="#e8636b" stroke-width="1"/>
<rect x="765.2" y="1.8" width="9.4" height="6.6" rx="0.5" fill="none" stroke="#4a4a4a" stroke-width="0.95"/>
<path d="M768.2 10.2 h3.4 M769.9 8.4 v1.8" stroke="#4a4a4a" stroke-width="0.95"/>
<circle cx="789.3" cy="6" r="3.2" fill="none" stroke="#5a9ee0" stroke-width="0.95"/>
<path d="M787.6 2.9 L788 1.3 h2.6 L791 2.9 M787.6 9.1 L788 10.7 h2.6 L791 9.1" fill="none" stroke="#5a9ee0" stroke-width="0.8"/>
<path d="M789.3 4.4 V6.2 H790.6" fill="none" stroke="#5a9ee0" stroke-width="0.7"/>
</g></svg>
<div class="ab" style="left:0px;top:382.7px;width:644px;height:15.5px;background:#ffffff"></div>
<div class="ab" style="left:194.1px;top:382.7px;width:97.8px;height:15.5px;background:#fdf8e5"></div>
<div class="t" style="left:2.4px;top:388.18px;font-size:7.7px;color:#444;transform:scaleX(0.956);transform-origin:0 0;">Office</div>
<div class="t" style="left:99.3px;top:388.18px;font-size:7.7px;color:#444;transform:scaleX(0.995);transform-origin:0 0;">Mustermann Max</div>
<div class="t" style="left:196.8px;top:388.18px;font-size:7.7px;color:#222;font-weight:bold;transform:scaleX(0.992);transform-origin:0 0;">Arbeiten</div>
<div class="t" style="left:300.5px;top:388.18px;font-size:7.7px;color:#444;transform:scaleX(0.929);transform-origin:0 0;">29.07.2016</div>
<div class="t" style="left:354.5px;top:388.18px;font-size:7.7px;color:#444;transform:scaleX(0.975);transform-origin:0 0;">12:00</div>
<div class="t" style="left:394.1px;top:388.18px;font-size:7.7px;color:#444;transform:scaleX(0.955);transform-origin:0 0;">16:00</div>
<div class="t" style="left:439.3px;top:388.18px;font-size:7.7px;color:#3a9c3a;transform:scaleX(0.953);transform-origin:0 0;">4.00 h</div>
<div class="t" style="left:480.2px;top:388.18px;font-size:7.7px;color:#3a9c3a;transform:scaleX(0.954);transform-origin:0 0;">0.00</div>
<svg class="ab" style="left:507.5px;top:384.45px;" width="140" height="12" viewBox="0 0 140 12"><g transform="translate(-664,0)">
<rect x="666.6" y="1.6" width="8.4" height="8.4" fill="#fff" stroke="#a8a8a8" stroke-width="0.8"/>
<path d="M697.6 2.2 L692.2 2.2 L691.4 3 L691.4 10.2 L695 10.2" fill="none" stroke="#c6c6c6" stroke-width="0.7"/>
<path d="M693.8 9.8 L699.2 2.2" stroke="#f0882a" stroke-width="1.9" fill="none" stroke-linecap="round"/>
<path d="M694.2 9.2 L698.6 2.9" stroke="#fde3c8" stroke-width="0.5" fill="none"/>
<circle cx="708" cy="3.4" r="1.9" fill="none" stroke="#c4c4c4" stroke-width="0.7"/>
<path d="M708 5.4 L708 7.2 M705.6 10.4 L706.6 7.6 L709.4 7.6 L710.4 10.4 M704.6 10.4 h2.4 M709 10.4 h2.4" fill="none" stroke="#c4c4c4" stroke-width="0.6"/>
<path d="M728.4 5.2 A4.5 4.5 0 0 1 736.2 3.6" fill="none" stroke="#28a08e" stroke-width="1.2"/>
<path d="M736.6 6.8 A4.5 4.5 0 0 1 728.8 8.4" fill="none" stroke="#28a08e" stroke-width="1.2"/>
<path d="M734.4 2.6 L737.8 2.2 L737 5.6 Z M730.6 9.4 L727.2 9.8 L728 6.4 Z" fill="#28a08e"/>
<circle cx="757" cy="6" r="4.1" fill="none" stroke="#e8636b" stroke-width="0.9"/>
<path d="M754.8 6 h4.4" stroke="#e8636b" stroke-width="1"/>
<rect x="765.2" y="1.8" width="9.4" height="6.6" rx="0.5" fill="none" stroke="#4a4a4a" stroke-width="0.95"/>
<path d="M768.2 10.2 h3.4 M769.9 8.4 v1.8" stroke="#4a4a4a" stroke-width="0.95"/>
<circle cx="789.3" cy="6" r="3.2" fill="none" stroke="#5a9ee0" stroke-width="0.95"/>
<path d="M787.6 2.9 L788 1.3 h2.6 L791 2.9 M787.6 9.1 L788 10.7 h2.6 L791 9.1" fill="none" stroke="#5a9ee0" stroke-width="0.8"/>
<path d="M789.3 4.4 V6.2 H790.6" fill="none" stroke="#5a9ee0" stroke-width="0.7"/>
</g></svg>
<div class="ab" style="left:0px;top:351.2px;width:644px;height:0.9px;background:#dcdcdc"></div>
<div class="ab" style="left:0px;top:398.2px;width:644px;height:1.5px;background:#cfcfcf"></div>
<div class="ab" style="left:0px;top:399.7px;width:644px;height:15px;background:#d2e3f3"></div>
<div class="ab" style="left:194.1px;top:399.7px;width:97.8px;height:15px;background:#fdf8e5"></div>
<div class="t" style="left:442.5px;top:405.43px;font-size:6.1px;color:#2e9a2e;font-weight:bold;transform:scaleX(0.994);transform-origin:0 0;">7.50 h</div>
</div>
<div class="ab" style="left:801px;top:157.8px;width:11px;height:370px;background:#f1f1f1"></div>
<div class="ab" style="left:802.1px;top:169px;width:7.8px;height:309.5px;background:#c1c1c1"></div>
<svg class="ab" style="left:802px;top:160px;" width="10" height="370" viewBox="0 0 10 370"><path d="M1.8 5.6 L4 3.2 L6.2 5.6 Z" fill="#a3a3a3"/><path d="M1.8 360.2 L4 362.8 L6.2 360.2 Z" fill="#333"/></svg>
<div class="ab" style="left:156.5px;top:527.8px;width:655.5px;height:21.8px;background:#fff"></div>
<div class="ab" style="left:156.5px;top:527.4px;width:655.5px;height:1px;background:#e4e4e4"></div>
<svg class="ab" style="left:156px;top:528px;" width="660" height="22" viewBox="0 0 660 22"><g transform="translate(-156,-528)">
<path d="M167 533.6 L162.8 538.6 L167 543.6 M171.4 533.6 L167.2 538.6 L171.4 543.6" fill="none" stroke="#b5b5b5" stroke-width="0.9"/>
<path d="M189.6 533.6 L184.6 538.6 L189.6 543.6" fill="none" stroke="#b5b5b5" stroke-width="0.9"/>
<path d="M200.6 534 v9" stroke="#dcdcdc" stroke-width="0.8"/>
<path d="M299.6 534 v9" stroke="#dcdcdc" stroke-width="0.8"/>
<path d="M312.6 533.6 L317.6 538.6 L312.6 543.6" fill="none" stroke="#b5b5b5" stroke-width="0.9"/>
<path d="M332.4 533.6 L336.6 538.6 L332.4 543.6 M336.8 533.6 L341 538.6 L336.8 543.6" fill="none" stroke="#b5b5b5" stroke-width="0.9"/>
<path d="M347.6 534 v9" stroke="#dcdcdc" stroke-width="0.8"/>
<path d="M365.2 535.6 A5 5 0 1 1 362.6 533.6" fill="none" stroke="#b5b5b5" stroke-width="1"/>
<path d="M362 532 L365.6 533.6 L363 536.4" fill="none" stroke="#b5b5b5" stroke-width="0.9"/>
<path d="M655.4 534 v9" stroke="#dcdcdc" stroke-width="0.8"/>
</g></svg>
<div class="t" style="left:210.5px;top:536.15px;font-size:7.85px;color:#555;transform:scaleX(0.894);transform-origin:0 0;">Seite</div>
<div class="ab" style="left:238.8px;top:532px;width:25.5px;height:13.4px;background:#fff;border:1px solid #cfcfcf"></div>
<div class="t" style="left:242.3px;top:536.15px;font-size:7.85px;color:#444;">1</div>
<div class="t" style="left:270.7px;top:536.15px;font-size:7.85px;color:#555;transform:scaleX(0.927);transform-origin:0 0;">von 1</div>
<div class="t" style="left:575.5px;top:536.15px;font-size:7.85px;color:#555;transform:scaleX(0.943);transform-origin:0 0;">Ansicht 1 - 15 von 15</div>
<div class="t" style="left:665px;top:536.15px;font-size:7.85px;color:#555;transform:scaleX(0.942);transform-origin:0 0;">Zeige</div>
<div class="ab" style="left:693.5px;top:532px;width:34.5px;height:13.4px;background:#fff;border:1px solid #dcdcdc;border-radius:1.5px"></div>
<svg class="ab" style="left:718px;top:537.2px;" width="6" height="4" viewBox="0 0 6 4"><path d="M0.4 0.6 L3 3.2 L5.6 0.6" fill="none" stroke="#8a8a8a" stroke-width="0.8"/></svg>
<div class="t" style="left:697.5px;top:536.65px;font-size:7.85px;color:#444;">20</div>
<div class="t" style="left:738.7px;top:536.15px;font-size:7.85px;color:#555;transform:scaleX(0.948);transform-origin:0 0;">Elemente pro Seite</div>
<div class="ab" style="left:812px;top:126.6px;width:166.6px;height:423px;background:#f2f2f2"></div>
<div class="t" style="left:823.5px;top:135.14px;font-size:10.47px;color:#4a86c8;transform:scaleX(0.903);transform-origin:0 0;">Montag, 25.07.2016</div>
<svg class="ab" style="left:960px;top:131px;" width="16" height="17" viewBox="0 0 16 17"><circle cx="8.3" cy="8.5" r="5.4" fill="none" stroke="#999" stroke-width="0.9"/><path d="M7.2 5.6 L9.9 8.5 L7.2 11.4" fill="none" stroke="#888" stroke-width="0.9"/></svg>
<div class="ab" style="left:817.9px;top:153.3px;width:32.6px;height:396.3px;background:#f4f7fb"></div>
<div class="ab" style="left:850.5px;top:153.3px;width:117.1px;height:396.3px;background:#fff"></div>
<div class="ab" style="left:817.9px;top:152.8px;width:149.7px;height:1px;background:#e2e5ea"></div>
<div class="ab" style="left:850px;top:153.3px;width:1px;height:396.3px;background:#dde3ec"></div>
<div class="ab" style="left:967px;top:153.3px;width:1.2px;height:396.3px;background:#c9d8f6"></div>
<div class="ab" style="left:851px;top:166.62px;width:116px;height:0.8px;background:#efefef"></div>
<div class="t" style="left:830.1px;top:156.88px;font-size:7.7px;color:#2a2a2a;transform:scaleX(0.903);transform-origin:0 0;">05:00</div>
<div class="ab" style="left:817.9px;top:180.25px;width:149.1px;height:1px;background:#e3e3e3"></div>
<div class="ab" style="left:851px;top:194.07px;width:116px;height:0.8px;background:#efefef"></div>
<div class="t" style="left:830.1px;top:184.33px;font-size:7.7px;color:#2a2a2a;transform:scaleX(0.903);transform-origin:0 0;">06:00</div>
<div class="ab" style="left:817.9px;top:207.7px;width:149.1px;height:1px;background:#e3e3e3"></div>
<div class="ab" style="left:851px;top:221.53px;width:116px;height:0.8px;background:#efefef"></div>
<div class="t" style="left:830.1px;top:211.78px;font-size:7.7px;color:#2a2a2a;transform:scaleX(0.903);transform-origin:0 0;">07:00</div>
<div class="ab" style="left:817.9px;top:235.15px;width:149.1px;height:1px;background:#e3e3e3"></div>
<div class="ab" style="left:851px;top:248.97px;width:116px;height:0.8px;background:#efefef"></div>
<div class="t" style="left:830.1px;top:239.23px;font-size:7.7px;color:#2a2a2a;transform:scaleX(0.903);transform-origin:0 0;">08:00</div>
<div class="ab" style="left:817.9px;top:262.6px;width:149.1px;height:1px;background:#e3e3e3"></div>
<div class="ab" style="left:851px;top:276.43px;width:116px;height:0.8px;background:#efefef"></div>
<div class="t" style="left:830.1px;top:266.68px;font-size:7.7px;color:#2a2a2a;transform:scaleX(0.903);transform-origin:0 0;">09:00</div>
<div class="ab" style="left:817.9px;top:290.05px;width:149.1px;height:1px;background:#e3e3e3"></div>
<div class="ab" style="left:851px;top:303.88px;width:116px;height:0.8px;background:#efefef"></div>
<div class="t" style="left:830.1px;top:294.13px;font-size:7.7px;color:#2a2a2a;transform:scaleX(0.903);transform-origin:0 0;">10:00</div>
<div class="ab" style="left:817.9px;top:317.5px;width:149.1px;height:1px;background:#e3e3e3"></div>
<div class="ab" style="left:851px;top:331.33px;width:116px;height:0.8px;background:#efefef"></div>
<div class="t" style="left:830.1px;top:321.58px;font-size:7.7px;color:#2a2a2a;transform:scaleX(0.930);transform-origin:0 0;">11:00</div>
<div class="ab" style="left:817.9px;top:344.95px;width:149.1px;height:1px;background:#e3e3e3"></div>
<div class="ab" style="left:851px;top:358.78px;width:116px;height:0.8px;background:#efefef"></div>
<div class="t" style="left:830.1px;top:349.03px;font-size:7.7px;color:#2a2a2a;transform:scaleX(0.903);transform-origin:0 0;">12:00</div>
<div class="ab" style="left:817.9px;top:372.4px;width:149.1px;height:1px;background:#e3e3e3"></div>
<div class="ab" style="left:851px;top:386.23px;width:116px;height:0.8px;background:#efefef"></div>
<div class="t" style="left:830.1px;top:376.48px;font-size:7.7px;color:#2a2a2a;transform:scaleX(0.903);transform-origin:0 0;">13:00</div>
<div class="ab" style="left:817.9px;top:399.85px;width:149.1px;height:1px;background:#e3e3e3"></div>
<div class="ab" style="left:851px;top:413.68px;width:116px;height:0.8px;background:#efefef"></div>
<div class="t" style="left:830.1px;top:403.93px;font-size:7.7px;color:#2a2a2a;transform:scaleX(0.903);transform-origin:0 0;">14:00</div>
<div class="ab" style="left:817.9px;top:427.3px;width:149.1px;height:1px;background:#e3e3e3"></div>
<div class="ab" style="left:851px;top:441.13px;width:116px;height:0.8px;background:#efefef"></div>
<div class="t" style="left:830.1px;top:431.38px;font-size:7.7px;color:#2a2a2a;transform:scaleX(0.903);transform-origin:0 0;">15:00</div>
<div class="ab" style="left:817.9px;top:454.75px;width:149.1px;height:1px;background:#e3e3e3"></div>
<div class="ab" style="left:851px;top:468.58px;width:116px;height:0.8px;background:#efefef"></div>
<div class="t" style="left:830.1px;top:458.83px;font-size:7.7px;color:#2a2a2a;transform:scaleX(0.903);transform-origin:0 0;">16:00</div>
<div class="ab" style="left:817.9px;top:482.2px;width:149.1px;height:1px;background:#e3e3e3"></div>
<div class="ab" style="left:851px;top:496.03px;width:116px;height:0.8px;background:#efefef"></div>
<div class="t" style="left:830.1px;top:486.28px;font-size:7.7px;color:#2a2a2a;transform:scaleX(0.903);transform-origin:0 0;">17:00</div>
<div class="ab" style="left:817.9px;top:509.65px;width:149.1px;height:1px;background:#e3e3e3"></div>
<div class="ab" style="left:851px;top:523.48px;width:116px;height:0.8px;background:#efefef"></div>
<div class="t" style="left:830.1px;top:513.73px;font-size:7.7px;color:#2a2a2a;transform:scaleX(0.903);transform-origin:0 0;">18:00</div>
<div class="ab" style="left:817.9px;top:537.1px;width:149.1px;height:1px;background:#e3e3e3"></div>
<div class="ab" style="left:851px;top:550.93px;width:116px;height:0.8px;background:#efefef"></div>
<div class="t" style="left:830.1px;top:541.18px;font-size:7.7px;color:#2a2a2a;transform:scaleX(0.903);transform-origin:0 0;">19:00</div>
<div class="ab" style="left:851.8px;top:235.9px;width:111.2px;height:114.8px;background:#5b8bbf;border-radius:2px"></div>
<div class="t" style="left:855.6px;top:238.79px;font-size:6.98px;color:#fff;font-weight:bold;transform:scaleX(0.963);transform-origin:0 0;">08:00 - 12:15 Arbeiten</div>
<div class="ab" style="left:900.5px;top:347.8px;width:13.5px;height:1.8px;background:#9dbbdc"></div>
<div class="ab" style="left:851.8px;top:352.9px;width:111.2px;height:25.5px;background:#87a82a;border-radius:2px"></div>
<div class="t" style="left:855.6px;top:355.79px;font-size:6.98px;color:#fff;font-weight:bold;transform:scaleX(0.979);transform-origin:0 0;">12:15 - 13:15 Pause</div>
<div class="ab" style="left:851.8px;top:380.5px;width:111.2px;height:114.5px;background:#2f6aa5;border-radius:2px"></div>
<div class="t" style="left:855.6px;top:383.39px;font-size:6.98px;color:#fff;font-weight:bold;transform:scaleX(0.963);transform-origin:0 0;">13:15 - 17:30 Arbeiten</div>
<div class="ab" style="left:968.2px;top:153.3px;width:10.4px;height:396.3px;background:#f0f0f0"></div>
<div class="ab" style="left:969.8px;top:242px;width:7.2px;height:225.5px;background:#c1c1c1"></div>
<svg class="ab" style="left:968px;top:153px;" width="11" height="397" viewBox="0 0 11 397"><path d="M2.8 7.4 L5.2 4.8 L7.6 7.4 Z" fill="#222"/><path d="M2.8 389.4 L5.2 392 L7.6 389.4 Z" fill="#222"/></svg>
<svg class="ab" style="left:811px;top:333px;" width="7" height="10" viewBox="0 0 7 10"><path d="M2 1 L5 4.5 L2 8" fill="none" stroke="#d0d0d0" stroke-width="0.8"/></svg>
<div class="ab" style="left:0px;top:0px;width:980px;height:1px;background:#8a8a8a"></div>
<div class="ab" style="left:0px;top:0px;width:1.2px;height:551px;background:#8a8a8a"></div>
<div class="ab" style="left:978.6px;top:0px;width:1.4px;height:551px;background:#9a9a9a"></div>
<div class="ab" style="left:0px;top:549.6px;width:980px;height:1.4px;background:#8a8a8a"></div>
</body></html>
